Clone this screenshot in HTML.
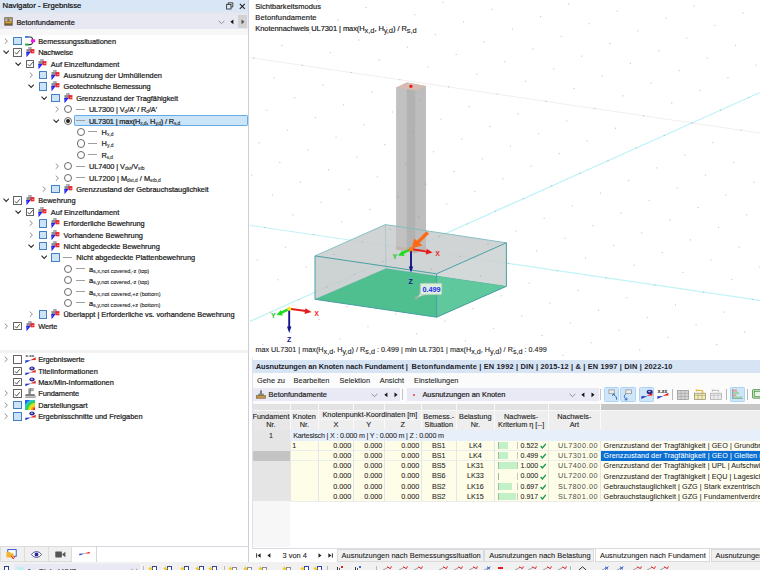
<!DOCTYPE html>
<html lang="de"><head><meta charset="utf-8"><title>Navigator - Ergebnisse</title>
<style>
html,body{margin:0;padding:0}
body{width:760px;height:570px;overflow:hidden;background:#fff;position:relative;font-family:"Liberation Sans",sans-serif;font-size:7.4px;color:#1b1b1b;-webkit-text-stroke-width:0.22px}
.a{position:absolute;white-space:nowrap}
svg text{-webkit-text-stroke-width:0}
sub{font-size:66%;vertical-align:baseline;position:relative;top:0.22em;line-height:0;-webkit-text-stroke-width:0.08px}
.nt{font-size:7.4px;line-height:11px;height:11px}
.s2 sub{font-size:76%}
.vt{font-size:7.2px;line-height:10px;-webkit-text-stroke-width:0.1px}
.vt sub{font-size:100%;top:0.3em}
.cbp{width:8.5px;height:8.5px;box-sizing:border-box;border:0.9px solid #3f7fc4;background:#cfe3f6;border-radius:0.6px}
.cbc{width:8.5px;height:8.5px;box-sizing:border-box;border:0.8px solid #626262;background:#fff;border-radius:0.6px}
.rd{width:8.3px;height:8.3px;box-sizing:border-box;border:0.8px solid #6a6a6a;background:#fff;border-radius:50%}
.rdd{position:absolute;left:1.55px;top:1.55px;width:3.8px;height:3.8px;border-radius:50%;background:#222}
.th{font-size:7.3px;line-height:8.3px;text-align:center;color:#222;-webkit-text-stroke-width:0.12px}
.td{font-size:7.2px;line-height:10.15px;height:10.15px;margin-top:0.45px;-webkit-text-stroke-width:0.06px}
.mono{font-size:7.3px;-webkit-text-stroke-width:0;color:#505050}
.tb{font-size:7.4px;line-height:11px;-webkit-text-stroke-width:0.1px}
.ttl{font-size:7.4px;line-height:11px;font-weight:700;color:#1c1c2a;-webkit-text-stroke-width:0}
.hb{background:#cfe6fa;border:0.7px solid #acd4f4;box-sizing:border-box;border-radius:1.5px}
</style></head><body>
<!-- navigator -->
<div class="a" style="left:0;top:0;width:248px;height:14px;background:#e4e7ee"></div>
<div class="a" style="left:0;top:0;width:248px;height:12px;background:#d9e6f5"></div>
<div class="a" style="left:2.6px;top:0.4px;font-size:7.75px;line-height:11px;color:#111">Navigator - Ergebnisse</div>
<svg class="a" style="left:226px;top:2px" width="8" height="8" viewBox="0 0 8 8"><rect x="0.6" y="2.4" width="4.4" height="4.6" fill="none" stroke="#333" stroke-width="0.9"/><path d="M2.2 2.2 V0.8 H6.8 V5 H5.2" fill="none" stroke="#333" stroke-width="0.9"/></svg>
<svg class="a" style="left:238.6px;top:2.6px" width="7" height="7" viewBox="0 0 7 7"><path d="M0.8 0.8 L5.8 5.8 M5.8 0.8 L0.8 5.8" stroke="#222" stroke-width="1.1"/></svg>
<div class="a" style="left:0;top:13.9px;width:248px;height:14.8px;background:#e8e8f3"></div>
<div class="a" style="left:0;top:28.7px;width:248px;height:6px;background:#f7f7f7"></div>
<div class="a" style="left:238px;top:15px;width:9px;height:13.2px;background:#d2d2d2"></div>
<svg class="a" style="left:4px;top:16.6px" width="9" height="9" viewBox="0 0 9 9"><rect x="0.3" y="0.3" width="8.4" height="8.4" fill="#6a5a40"/><rect x="1.2" y="1.2" width="6.6" height="3.4" fill="#c8b48a"/><rect x="1.4" y="4.8" width="6.2" height="1.6" fill="#e0a020"/><rect x="3.4" y="1.4" width="2.2" height="3.4" fill="#777"/></svg>
<div class="a nt" style="left:16.4px;top:16.6px">Betonfundamente</div>
<svg class="a" style="left:218px;top:19.6px" width="7" height="5" viewBox="0 0 7 5"><path d="M0.6 0.8 L3.5 3.7 L6.4 0.8" fill="none" stroke="#777" stroke-width="0.8"/></svg>
<svg class="a" style="left:230px;top:19.4px" width="4" height="6" viewBox="0 0 4 6"><polygon points="3.4,0.4 3.4,5.2 0.4,2.8" fill="#111"/></svg>
<svg class="a" style="left:240.8px;top:19.4px" width="4" height="6" viewBox="0 0 4 6"><polygon points="0.5,0.4 0.5,5.2 3.5,2.8" fill="#555"/></svg>
<div class="a" style="left:73.5px;top:115.30px;width:174.2px;height:10.5px;background:#cce4f7;border:0.8px solid #62abe8;border-radius:1.2px;box-sizing:border-box"></div>
<svg class="a" style="left:4.10px;top:37.80px" width="4.4" height="6.4" viewBox="0 0 4.4 6.4"><path d="M0.7 0.5 L3.4 3.2 L0.7 5.9" fill="none" stroke="#8c8c8c" stroke-width="1"/></svg><div class="a cbp" style="left:13.20px;top:36.70px"></div><svg class="a" style="left:25.00px;top:36.30px" width="11" height="10" viewBox="0 0 11 10"><path d="M3 1 H5.4 C8.4 1 8.4 8.6 5.4 8.6 H3" fill="none" stroke="#303030" stroke-width="1.1"/><rect x="0" y="0" width="3.4" height="1.9" fill="#3b7cf0"/><rect x="0" y="7.6" width="3.4" height="2" fill="#22b534"/><rect x="6" y="3.2" width="4.2" height="3.2" rx="0.8" fill="#f414ea"/></svg><div class="a nt" style="left:38.20px;top:35.75px;letter-spacing:-0.033px;">Bemessungssituationen</div>
<svg class="a" style="left:2.70px;top:50.20px" width="6.4" height="4.4" viewBox="0 0 6.4 4.4"><path d="M0.5 0.7 L3.2 3.4 L5.9 0.7" fill="none" stroke="#2b2b2b" stroke-width="1.1"/></svg><div class="a cbc" style="left:13.20px;top:48.10px"><svg width="8.5" height="8.5" viewBox="0 0 8.5 8.5" style="position:absolute;left:-0.8px;top:-0.8px"><path d="M1.9 4.3 L3.6 6.1 L6.8 2.2" fill="none" stroke="#333" stroke-width="0.85"/></svg></div><svg class="a" style="left:25.60px;top:47.20px" width="9" height="11" viewBox="0 0 9 11"><rect x="2.4" y="0" width="1.2" height="2.6" fill="#858590"/><rect x="4.2" y="0" width="1.3" height="2.6" fill="#858590"/><rect x="3.6" y="0.2" width="0.6" height="2.4" fill="#b4b4c0"/><rect x="0.45" y="2.1" width="5.2" height="3" fill="#8a8a94"/><polygon points="0.2,5.1 4.7,5.1 0.6,10.3" fill="#2222f0"/><rect x="4.5" y="2.1" width="3.9" height="4.2" fill="#ee2630"/><rect x="6" y="4.3" width="1.5" height="0.6" fill="#fff" opacity="0.85"/><rect x="1.3" y="6.3" width="0.8" height="0.8" fill="#8a8af8"/></svg><div class="a nt" style="left:38.20px;top:47.15px;letter-spacing:-0.151px;">Nachweise</div>
<svg class="a" style="left:15.37px;top:61.60px" width="6.4" height="4.4" viewBox="0 0 6.4 4.4"><path d="M0.5 0.7 L3.2 3.4 L5.9 0.7" fill="none" stroke="#2b2b2b" stroke-width="1.1"/></svg><div class="a cbc" style="left:25.87px;top:59.50px"><svg width="8.5" height="8.5" viewBox="0 0 8.5 8.5" style="position:absolute;left:-0.8px;top:-0.8px"><path d="M1.9 4.3 L3.6 6.1 L6.8 2.2" fill="none" stroke="#333" stroke-width="0.85"/></svg></div><svg class="a" style="left:38.27px;top:58.60px" width="9" height="11" viewBox="0 0 9 11"><rect x="2.4" y="0" width="1.2" height="2.6" fill="#858590"/><rect x="4.2" y="0" width="1.3" height="2.6" fill="#858590"/><rect x="3.6" y="0.2" width="0.6" height="2.4" fill="#b4b4c0"/><rect x="0.45" y="2.1" width="5.2" height="3" fill="#8a8a94"/><polygon points="0.2,5.1 4.7,5.1 0.6,10.3" fill="#2222f0"/><rect x="4.5" y="2.1" width="3.9" height="4.2" fill="#ee2630"/><rect x="6" y="4.3" width="1.5" height="0.6" fill="#fff" opacity="0.85"/><rect x="1.3" y="6.3" width="0.8" height="0.8" fill="#8a8af8"/></svg><div class="a nt" style="left:50.87px;top:58.55px;letter-spacing:0.007px;">Auf Einzelfundament</div>
<svg class="a" style="left:29.44px;top:72.00px" width="4.4" height="6.4" viewBox="0 0 4.4 6.4"><path d="M0.7 0.5 L3.4 3.2 L0.7 5.9" fill="none" stroke="#8c8c8c" stroke-width="1"/></svg><div class="a cbp" style="left:38.54px;top:70.90px"></div><svg class="a" style="left:50.94px;top:70.00px" width="9" height="11" viewBox="0 0 9 11"><rect x="2.4" y="0" width="1.2" height="2.6" fill="#858590"/><rect x="4.2" y="0" width="1.3" height="2.6" fill="#858590"/><rect x="3.6" y="0.2" width="0.6" height="2.4" fill="#b4b4c0"/><rect x="0.45" y="2.1" width="5.2" height="3" fill="#8a8a94"/><polygon points="0.2,5.1 4.7,5.1 0.6,10.3" fill="#2222f0"/><rect x="4.5" y="2.1" width="3.9" height="4.2" fill="#ee2630"/><rect x="6" y="4.3" width="1.5" height="0.6" fill="#fff" opacity="0.85"/><rect x="1.3" y="6.3" width="0.8" height="0.8" fill="#8a8af8"/></svg><div class="a nt" style="left:63.54px;top:69.95px;letter-spacing:0.042px;">Ausnutzung der Umhüllenden</div>
<svg class="a" style="left:28.04px;top:84.40px" width="6.4" height="4.4" viewBox="0 0 6.4 4.4"><path d="M0.5 0.7 L3.2 3.4 L5.9 0.7" fill="none" stroke="#2b2b2b" stroke-width="1.1"/></svg><div class="a cbp" style="left:38.54px;top:82.30px"></div><svg class="a" style="left:50.94px;top:81.40px" width="9" height="11" viewBox="0 0 9 11"><rect x="2.4" y="0" width="1.2" height="2.6" fill="#858590"/><rect x="4.2" y="0" width="1.3" height="2.6" fill="#858590"/><rect x="3.6" y="0.2" width="0.6" height="2.4" fill="#b4b4c0"/><rect x="0.45" y="2.1" width="5.2" height="3" fill="#8a8a94"/><polygon points="0.2,5.1 4.7,5.1 0.6,10.3" fill="#2222f0"/><rect x="4.5" y="2.1" width="3.9" height="4.2" fill="#ee2630"/><rect x="6" y="4.3" width="1.5" height="0.6" fill="#fff" opacity="0.85"/><rect x="1.3" y="6.3" width="0.8" height="0.8" fill="#8a8af8"/></svg><div class="a nt" style="left:63.54px;top:81.35px;letter-spacing:-0.149px;">Geotechnische Bemessung</div>
<svg class="a" style="left:40.71px;top:95.80px" width="6.4" height="4.4" viewBox="0 0 6.4 4.4"><path d="M0.5 0.7 L3.2 3.4 L5.9 0.7" fill="none" stroke="#2b2b2b" stroke-width="1.1"/></svg><div class="a cbp" style="left:51.21px;top:93.70px"></div><svg class="a" style="left:63.61px;top:92.80px" width="9" height="11" viewBox="0 0 9 11"><rect x="2.4" y="0" width="1.2" height="2.6" fill="#858590"/><rect x="4.2" y="0" width="1.3" height="2.6" fill="#858590"/><rect x="3.6" y="0.2" width="0.6" height="2.4" fill="#b4b4c0"/><rect x="0.45" y="2.1" width="5.2" height="3" fill="#8a8a94"/><polygon points="0.2,5.1 4.7,5.1 0.6,10.3" fill="#2222f0"/><rect x="4.5" y="2.1" width="3.9" height="4.2" fill="#ee2630"/><rect x="6" y="4.3" width="1.5" height="0.6" fill="#fff" opacity="0.85"/><rect x="1.3" y="6.3" width="0.8" height="0.8" fill="#8a8af8"/></svg><div class="a nt" style="left:76.21px;top:92.75px;letter-spacing:-0.045px;">Grenzzustand der Tragfähigkeit</div>
<svg class="a" style="left:54.78px;top:106.20px" width="4.4" height="6.4" viewBox="0 0 4.4 6.4"><path d="M0.7 0.5 L3.4 3.2 L0.7 5.9" fill="none" stroke="#8c8c8c" stroke-width="1"/></svg><div class="a rd" style="left:63.88px;top:105.10px"></div><div class="a" style="left:75.68px;top:108.50px;width:9px;height:0.9px;background:#a0a0a0"></div><div class="a nt" style="left:88.88px;top:104.15px;letter-spacing:-0.113px;">UL7300 | V<sub>d</sub>/A' / R<sub>d</sub>/A'</div>
<svg class="a" style="left:53.38px;top:118.60px" width="6.4" height="4.4" viewBox="0 0 6.4 4.4"><path d="M0.5 0.7 L3.2 3.4 L5.9 0.7" fill="none" stroke="#2b2b2b" stroke-width="1.1"/></svg><div class="a rd" style="left:63.88px;top:116.50px"><div class="rdd"></div></div><div class="a" style="left:75.68px;top:119.90px;width:9px;height:0.9px;background:#a0a0a0"></div><div class="a nt" style="left:88.88px;top:115.55px;letter-spacing:-0.167px;">UL7301 | max(H<sub>x,d</sub>, H<sub>y,d</sub>) / R<sub>s,d</sub></div>
<div class="a rd" style="left:76.55px;top:127.90px"></div><div class="a" style="left:88.35px;top:131.30px;width:9px;height:0.9px;background:#a0a0a0"></div><div class="a nt" style="left:101.55px;top:126.95px;letter-spacing:0.048px;">H<sub>x,d</sub></div>
<div class="a rd" style="left:76.55px;top:139.30px"></div><div class="a" style="left:88.35px;top:142.70px;width:9px;height:0.9px;background:#a0a0a0"></div><div class="a nt" style="left:101.55px;top:138.35px;letter-spacing:0.137px;">H<sub>y,d</sub></div>
<div class="a rd" style="left:76.55px;top:150.70px"></div><div class="a" style="left:88.35px;top:154.10px;width:9px;height:0.9px;background:#a0a0a0"></div><div class="a nt" style="left:101.55px;top:149.75px;letter-spacing:-0.152px;">R<sub>s,d</sub></div>
<svg class="a" style="left:54.78px;top:163.20px" width="4.4" height="6.4" viewBox="0 0 4.4 6.4"><path d="M0.7 0.5 L3.4 3.2 L0.7 5.9" fill="none" stroke="#8c8c8c" stroke-width="1"/></svg><div class="a rd" style="left:63.88px;top:162.10px"></div><div class="a" style="left:75.68px;top:165.50px;width:9px;height:0.9px;background:#a0a0a0"></div><div class="a nt" style="left:88.88px;top:161.15px;letter-spacing:-0.075px;">UL7400 | V<sub>dst</sub>/V<sub>stb</sub></div>
<svg class="a" style="left:54.78px;top:174.60px" width="4.4" height="6.4" viewBox="0 0 4.4 6.4"><path d="M0.7 0.5 L3.4 3.2 L0.7 5.9" fill="none" stroke="#8c8c8c" stroke-width="1"/></svg><div class="a rd" style="left:63.88px;top:173.50px"></div><div class="a" style="left:75.68px;top:176.90px;width:9px;height:0.9px;background:#a0a0a0"></div><div class="a nt" style="left:88.88px;top:172.55px;letter-spacing:0.011px;">UL7200 | M<sub>dst,d</sub> / M<sub>stb,d</sub></div>
<svg class="a" style="left:42.11px;top:186.00px" width="4.4" height="6.4" viewBox="0 0 4.4 6.4"><path d="M0.7 0.5 L3.4 3.2 L0.7 5.9" fill="none" stroke="#8c8c8c" stroke-width="1"/></svg><div class="a cbp" style="left:51.21px;top:184.90px"></div><svg class="a" style="left:63.61px;top:184.00px" width="9" height="11" viewBox="0 0 9 11"><rect x="2.4" y="0" width="1.2" height="2.6" fill="#858590"/><rect x="4.2" y="0" width="1.3" height="2.6" fill="#858590"/><rect x="3.6" y="0.2" width="0.6" height="2.4" fill="#b4b4c0"/><rect x="0.45" y="2.1" width="5.2" height="3" fill="#8a8a94"/><polygon points="0.2,5.1 4.7,5.1 0.6,10.3" fill="#2222f0"/><rect x="4.5" y="2.1" width="3.9" height="4.2" fill="#ee2630"/><rect x="6" y="4.3" width="1.5" height="0.6" fill="#fff" opacity="0.85"/><rect x="1.3" y="6.3" width="0.8" height="0.8" fill="#8a8af8"/></svg><div class="a nt" style="left:76.21px;top:183.95px;letter-spacing:-0.043px;">Grenzzustand der Gebrauchstauglichkeit</div>
<svg class="a" style="left:2.70px;top:198.40px" width="6.4" height="4.4" viewBox="0 0 6.4 4.4"><path d="M0.5 0.7 L3.2 3.4 L5.9 0.7" fill="none" stroke="#2b2b2b" stroke-width="1.1"/></svg><div class="a cbc" style="left:13.20px;top:196.30px"><svg width="8.5" height="8.5" viewBox="0 0 8.5 8.5" style="position:absolute;left:-0.8px;top:-0.8px"><path d="M1.9 4.3 L3.6 6.1 L6.8 2.2" fill="none" stroke="#333" stroke-width="0.85"/></svg></div><svg class="a" style="left:25.60px;top:195.40px" width="9" height="11" viewBox="0 0 9 11"><rect x="2.4" y="0" width="1.2" height="2.6" fill="#858590"/><rect x="4.2" y="0" width="1.3" height="2.6" fill="#858590"/><rect x="3.6" y="0.2" width="0.6" height="2.4" fill="#b4b4c0"/><rect x="0.45" y="2.1" width="5.2" height="3" fill="#8a8a94"/><polygon points="0.2,5.1 4.7,5.1 0.6,10.3" fill="#2222f0"/><rect x="4.5" y="2.1" width="3.9" height="4.2" fill="#ee2630"/><rect x="6" y="4.3" width="1.5" height="0.6" fill="#fff" opacity="0.85"/><rect x="1.3" y="6.3" width="0.8" height="0.8" fill="#8a8af8"/></svg><div class="a nt" style="left:38.20px;top:195.35px;letter-spacing:-0.010px;">Bewehrung</div>
<svg class="a" style="left:15.37px;top:209.80px" width="6.4" height="4.4" viewBox="0 0 6.4 4.4"><path d="M0.5 0.7 L3.2 3.4 L5.9 0.7" fill="none" stroke="#2b2b2b" stroke-width="1.1"/></svg><div class="a cbc" style="left:25.87px;top:207.70px"><svg width="8.5" height="8.5" viewBox="0 0 8.5 8.5" style="position:absolute;left:-0.8px;top:-0.8px"><path d="M1.9 4.3 L3.6 6.1 L6.8 2.2" fill="none" stroke="#333" stroke-width="0.85"/></svg></div><svg class="a" style="left:38.27px;top:206.80px" width="9" height="11" viewBox="0 0 9 11"><rect x="2.4" y="0" width="1.2" height="2.6" fill="#858590"/><rect x="4.2" y="0" width="1.3" height="2.6" fill="#858590"/><rect x="3.6" y="0.2" width="0.6" height="2.4" fill="#b4b4c0"/><rect x="0.45" y="2.1" width="5.2" height="3" fill="#8a8a94"/><polygon points="0.2,5.1 4.7,5.1 0.6,10.3" fill="#2222f0"/><rect x="4.5" y="2.1" width="3.9" height="4.2" fill="#ee2630"/><rect x="6" y="4.3" width="1.5" height="0.6" fill="#fff" opacity="0.85"/><rect x="1.3" y="6.3" width="0.8" height="0.8" fill="#8a8af8"/></svg><div class="a nt" style="left:50.87px;top:206.75px;letter-spacing:0.007px;">Auf Einzelfundament</div>
<svg class="a" style="left:29.44px;top:220.20px" width="4.4" height="6.4" viewBox="0 0 4.4 6.4"><path d="M0.7 0.5 L3.4 3.2 L0.7 5.9" fill="none" stroke="#8c8c8c" stroke-width="1"/></svg><div class="a cbp" style="left:38.54px;top:219.10px"></div><svg class="a" style="left:50.94px;top:218.20px" width="9" height="11" viewBox="0 0 9 11"><rect x="2.4" y="0" width="1.2" height="2.6" fill="#858590"/><rect x="4.2" y="0" width="1.3" height="2.6" fill="#858590"/><rect x="3.6" y="0.2" width="0.6" height="2.4" fill="#b4b4c0"/><rect x="0.45" y="2.1" width="5.2" height="3" fill="#8a8a94"/><polygon points="0.2,5.1 4.7,5.1 0.6,10.3" fill="#2222f0"/><rect x="4.5" y="2.1" width="3.9" height="4.2" fill="#ee2630"/><rect x="6" y="4.3" width="1.5" height="0.6" fill="#fff" opacity="0.85"/><rect x="1.3" y="6.3" width="0.8" height="0.8" fill="#8a8af8"/></svg><div class="a nt" style="left:63.54px;top:218.15px;letter-spacing:-0.008px;">Erforderliche Bewehrung</div>
<svg class="a" style="left:29.44px;top:231.60px" width="4.4" height="6.4" viewBox="0 0 4.4 6.4"><path d="M0.7 0.5 L3.4 3.2 L0.7 5.9" fill="none" stroke="#8c8c8c" stroke-width="1"/></svg><div class="a cbp" style="left:38.54px;top:230.50px"></div><svg class="a" style="left:50.94px;top:229.60px" width="9" height="11" viewBox="0 0 9 11"><rect x="2.4" y="0" width="1.2" height="2.6" fill="#858590"/><rect x="4.2" y="0" width="1.3" height="2.6" fill="#858590"/><rect x="3.6" y="0.2" width="0.6" height="2.4" fill="#b4b4c0"/><rect x="0.45" y="2.1" width="5.2" height="3" fill="#8a8a94"/><polygon points="0.2,5.1 4.7,5.1 0.6,10.3" fill="#2222f0"/><rect x="4.5" y="2.1" width="3.9" height="4.2" fill="#ee2630"/><rect x="6" y="4.3" width="1.5" height="0.6" fill="#fff" opacity="0.85"/><rect x="1.3" y="6.3" width="0.8" height="0.8" fill="#8a8af8"/></svg><div class="a nt" style="left:63.54px;top:229.55px;letter-spacing:0.002px;">Vorhandene Bewehrung</div>
<svg class="a" style="left:28.04px;top:244.00px" width="6.4" height="4.4" viewBox="0 0 6.4 4.4"><path d="M0.5 0.7 L3.2 3.4 L5.9 0.7" fill="none" stroke="#2b2b2b" stroke-width="1.1"/></svg><div class="a cbp" style="left:38.54px;top:241.90px"></div><svg class="a" style="left:50.94px;top:241.00px" width="9" height="11" viewBox="0 0 9 11"><rect x="2.4" y="0" width="1.2" height="2.6" fill="#858590"/><rect x="4.2" y="0" width="1.3" height="2.6" fill="#858590"/><rect x="3.6" y="0.2" width="0.6" height="2.4" fill="#b4b4c0"/><rect x="0.45" y="2.1" width="5.2" height="3" fill="#8a8a94"/><polygon points="0.2,5.1 4.7,5.1 0.6,10.3" fill="#2222f0"/><rect x="4.5" y="2.1" width="3.9" height="4.2" fill="#ee2630"/><rect x="6" y="4.3" width="1.5" height="0.6" fill="#fff" opacity="0.85"/><rect x="1.3" y="6.3" width="0.8" height="0.8" fill="#8a8af8"/></svg><div class="a nt" style="left:63.54px;top:240.95px;letter-spacing:-0.012px;">Nicht abgedeckte Bewehrung</div>
<svg class="a" style="left:40.71px;top:255.40px" width="6.4" height="4.4" viewBox="0 0 6.4 4.4"><path d="M0.5 0.7 L3.2 3.4 L5.9 0.7" fill="none" stroke="#2b2b2b" stroke-width="1.1"/></svg><div class="a cbp" style="left:51.21px;top:253.30px"></div><div class="a" style="left:63.01px;top:256.70px;width:9px;height:0.9px;background:#a0a0a0"></div><div class="a nt" style="left:76.21px;top:252.35px;letter-spacing:0.007px;">Nicht abgedeckte Plattenbewehrung</div>
<div class="a rd" style="left:63.88px;top:264.70px"></div><div class="a" style="left:75.68px;top:268.10px;width:9px;height:0.9px;background:#a0a0a0"></div><div class="a nt" style="left:88.88px;top:263.75px;letter-spacing:-0.047px;"><span class="s2">a<sub>s,x,not covered,-z (top)</sub></span></div>
<div class="a rd" style="left:63.88px;top:276.10px"></div><div class="a" style="left:75.68px;top:279.50px;width:9px;height:0.9px;background:#a0a0a0"></div><div class="a nt" style="left:88.88px;top:275.15px;letter-spacing:-0.030px;"><span class="s2">a<sub>s,y,not covered,-z (top)</sub></span></div>
<div class="a rd" style="left:63.88px;top:287.50px"></div><div class="a" style="left:75.68px;top:290.90px;width:9px;height:0.9px;background:#a0a0a0"></div><div class="a nt" style="left:88.88px;top:286.55px;letter-spacing:-0.022px;"><span class="s2">a<sub>s,x,not covered,+z (bottom)</sub></span></div>
<div class="a rd" style="left:63.88px;top:298.90px"></div><div class="a" style="left:75.68px;top:302.30px;width:9px;height:0.9px;background:#a0a0a0"></div><div class="a nt" style="left:88.88px;top:297.95px;letter-spacing:-0.008px;"><span class="s2">a<sub>s,y,not covered,+z (bottom)</sub></span></div>
<svg class="a" style="left:29.44px;top:311.40px" width="4.4" height="6.4" viewBox="0 0 4.4 6.4"><path d="M0.7 0.5 L3.4 3.2 L0.7 5.9" fill="none" stroke="#8c8c8c" stroke-width="1"/></svg><div class="a cbp" style="left:38.54px;top:310.30px"></div><svg class="a" style="left:50.94px;top:309.40px" width="9" height="11" viewBox="0 0 9 11"><rect x="2.4" y="0" width="1.2" height="2.6" fill="#858590"/><rect x="4.2" y="0" width="1.3" height="2.6" fill="#858590"/><rect x="3.6" y="0.2" width="0.6" height="2.4" fill="#b4b4c0"/><rect x="0.45" y="2.1" width="5.2" height="3" fill="#8a8a94"/><polygon points="0.2,5.1 4.7,5.1 0.6,10.3" fill="#2222f0"/><rect x="4.5" y="2.1" width="3.9" height="4.2" fill="#ee2630"/><rect x="6" y="4.3" width="1.5" height="0.6" fill="#fff" opacity="0.85"/><rect x="1.3" y="6.3" width="0.8" height="0.8" fill="#8a8af8"/></svg><div class="a nt" style="left:63.54px;top:309.35px;letter-spacing:-0.021px;">Überlappt | Erforderliche vs. vorhandene Bewehrung</div>
<svg class="a" style="left:4.10px;top:322.80px" width="4.4" height="6.4" viewBox="0 0 4.4 6.4"><path d="M0.7 0.5 L3.4 3.2 L0.7 5.9" fill="none" stroke="#8c8c8c" stroke-width="1"/></svg><div class="a cbc" style="left:13.20px;top:321.70px"><svg width="8.5" height="8.5" viewBox="0 0 8.5 8.5" style="position:absolute;left:-0.8px;top:-0.8px"><path d="M1.9 4.3 L3.6 6.1 L6.8 2.2" fill="none" stroke="#333" stroke-width="0.85"/></svg></div><svg class="a" style="left:25.60px;top:320.80px" width="9" height="11" viewBox="0 0 9 11"><rect x="2.4" y="0" width="1.2" height="2.6" fill="#858590"/><rect x="4.2" y="0" width="1.3" height="2.6" fill="#858590"/><rect x="3.6" y="0.2" width="0.6" height="2.4" fill="#b4b4c0"/><rect x="0.45" y="2.1" width="5.2" height="3" fill="#8a8a94"/><polygon points="0.2,5.1 4.7,5.1 0.6,10.3" fill="#2222f0"/><rect x="4.5" y="2.1" width="3.9" height="4.2" fill="#ee2630"/><rect x="6" y="4.3" width="1.5" height="0.6" fill="#fff" opacity="0.85"/><rect x="1.3" y="6.3" width="0.8" height="0.8" fill="#8a8af8"/></svg><div class="a nt" style="left:38.20px;top:320.75px;letter-spacing:-0.116px;">Werte</div>
<svg class="a" style="left:4.10px;top:356.20px" width="4.4" height="6.4" viewBox="0 0 4.4 6.4"><path d="M0.7 0.5 L3.4 3.2 L0.7 5.9" fill="none" stroke="#8c8c8c" stroke-width="1"/></svg>
<div class="a cbc" style="left:13.20px;top:355.10px"></div>
<svg class="a" style="left:24.60px;top:354.10px" width="11" height="10" viewBox="0 0 11 10"><text x="0.6" y="3.4" font-family="Liberation Sans" font-size="4.4" font-weight="700" fill="#222">x.xx</text><polygon points="0.3,6.25 0.3,8.95 5.90,6.15" fill="#1c37c8"/><polygon points="5.10,6.15 10.70,3.35 10.70,6.05" fill="#e8241c"/></svg>
<div class="a nt" style="left:38.2px;top:354.15px;letter-spacing:-0.073px;">Ergebniswerte</div>
<div class="a cbc" style="left:13.20px;top:366.50px"><svg width="8.5" height="8.5" viewBox="0 0 8.5 8.5" style="position:absolute;left:-0.8px;top:-0.8px"><path d="M1.9 4.3 L3.6 6.1 L6.8 2.2" fill="none" stroke="#333" stroke-width="0.85"/></svg></div>
<svg class="a" style="left:24.60px;top:365.50px" width="11" height="10" viewBox="0 0 11 10"><ellipse cx="7" cy="2.5" rx="2.7" ry="2" fill="#2e2e96"/><ellipse cx="6.8" cy="2.2" rx="1.2" ry="0.7" fill="#b8b8ee"/><polygon points="0.3,6.65 0.3,9.35 5.90,6.55" fill="#1c37c8"/><polygon points="5.10,6.55 10.70,3.75 10.70,6.45" fill="#e8241c"/></svg>
<div class="a nt" style="left:38.2px;top:365.55px;letter-spacing:0.074px;">Titelinformationen</div>
<div class="a cbc" style="left:13.20px;top:377.90px"><svg width="8.5" height="8.5" viewBox="0 0 8.5 8.5" style="position:absolute;left:-0.8px;top:-0.8px"><path d="M1.9 4.3 L3.6 6.1 L6.8 2.2" fill="none" stroke="#333" stroke-width="0.85"/></svg></div>
<svg class="a" style="left:24.60px;top:376.90px" width="11" height="10" viewBox="0 0 11 10"><ellipse cx="7" cy="2.5" rx="2.7" ry="2" fill="#2e2e96"/><ellipse cx="6.8" cy="2.2" rx="1.2" ry="0.7" fill="#b8b8ee"/><polygon points="0.3,6.65 0.3,9.35 5.90,6.55" fill="#1c37c8"/><polygon points="5.10,6.55 10.70,3.75 10.70,6.45" fill="#e8241c"/></svg>
<div class="a nt" style="left:38.2px;top:376.95px;">Max/Min-Informationen</div>
<svg class="a" style="left:4.10px;top:390.40px" width="4.4" height="6.4" viewBox="0 0 4.4 6.4"><path d="M0.7 0.5 L3.4 3.2 L0.7 5.9" fill="none" stroke="#8c8c8c" stroke-width="1"/></svg>
<div class="a cbc" style="left:13.20px;top:389.30px"><svg width="8.5" height="8.5" viewBox="0 0 8.5 8.5" style="position:absolute;left:-0.8px;top:-0.8px"><path d="M1.9 4.3 L3.6 6.1 L6.8 2.2" fill="none" stroke="#333" stroke-width="0.85"/></svg></div>
<svg class="a" style="left:24.60px;top:388.30px" width="11" height="10" viewBox="0 0 11 10"><rect x="3.4" y="0.5" width="2.4" height="6" fill="#8a8a8a"/><rect x="5.6" y="0.5" width="2.6" height="2.4" fill="#b0b0b0" stroke="#666" stroke-width="0.4"/><rect x="1" y="6.2" width="8.4" height="1.6" fill="#9a9a9a" stroke="#555" stroke-width="0.4"/><rect x="0.3" y="7.8" width="10" height="1.8" fill="#c8c8c8" stroke="#555" stroke-width="0.4"/></svg>
<div class="a nt" style="left:38.2px;top:388.35px;letter-spacing:-0.070px;">Fundamente</div>
<svg class="a" style="left:4.10px;top:401.80px" width="4.4" height="6.4" viewBox="0 0 4.4 6.4"><path d="M0.7 0.5 L3.4 3.2 L0.7 5.9" fill="none" stroke="#8c8c8c" stroke-width="1"/></svg>
<div class="a cbp" style="left:13.20px;top:400.70px"></div>
<svg class="a" style="left:24.60px;top:399.70px" width="10.4" height="10.4" viewBox="0 0 10.4 10.4"><defs><clipPath id="dc"><rect x="0" y="0" width="10.4" height="10.4"/></clipPath></defs><g clip-path="url(#dc)"><rect width="10.4" height="10.4" fill="#2a62f0"/><circle cx="10.4" cy="10.4" r="11.6" fill="#28c8e8"/><circle cx="10.4" cy="10.4" r="10" fill="#2ed058"/><circle cx="10.4" cy="10.4" r="7.6" fill="#b8e62a"/><circle cx="10.4" cy="10.4" r="6" fill="#ffe21e"/><circle cx="10.4" cy="10.4" r="4.4" fill="#ff961e"/><circle cx="10.4" cy="10.4" r="2.8" fill="#f0301e"/></g></svg>
<div class="a nt" style="left:38.2px;top:399.75px;letter-spacing:-0.027px;">Darstellungsart</div>
<svg class="a" style="left:4.10px;top:413.20px" width="4.4" height="6.4" viewBox="0 0 4.4 6.4"><path d="M0.7 0.5 L3.4 3.2 L0.7 5.9" fill="none" stroke="#8c8c8c" stroke-width="1"/></svg>
<div class="a cbp" style="left:13.20px;top:412.10px"></div>
<svg class="a" style="left:24.60px;top:411.10px" width="11" height="10" viewBox="0 0 11 10"><ellipse cx="7" cy="2.5" rx="2.7" ry="2" fill="#2e2e96"/><ellipse cx="6.8" cy="2.2" rx="1.2" ry="0.7" fill="#b8b8ee"/><polygon points="0.3,6.65 0.3,9.35 5.90,6.55" fill="#1c37c8"/><polygon points="5.10,6.55 10.70,3.75 10.70,6.45" fill="#e8241c"/></svg>
<div class="a nt" style="left:38.2px;top:411.15px;">Ergebnisschnitte und Freigaben</div>
<div class="a" style="left:0;top:349.8px;width:248px;height:3.2px;background:#f2f2f2"></div>
<!-- nav bottom tabs -->
<div class="a" style="left:0;top:546.3px;width:248px;height:15.4px;background:#fff;border-top:0.8px solid #d6d6de;box-sizing:border-box"></div>
<div class="a" style="left:0;top:546.3px;width:72.4px;height:15.4px;background:#f0f0f0;border:0.8px solid #dcdcdc;box-sizing:border-box"></div>
<div class="a" style="left:23.8px;top:546.3px;width:0.8px;height:15.4px;background:#dcdcdc"></div>
<div class="a" style="left:48.2px;top:546.3px;width:0.8px;height:15.4px;background:#dcdcdc"></div>
<div class="a" style="left:96.4px;top:546.3px;width:0.8px;height:15.4px;background:#d6d6de"></div>
<svg class="a" style="left:6.4px;top:548.6px" width="11" height="11" viewBox="0 0 11 11"><rect x="1.8" y="0.6" width="8.4" height="6.6" fill="#fff" stroke="#2a50c0" stroke-width="0.9"/><polygon points="0.4,3 4,3 5,4.2 7.6,4.2 7.6,8.6 0.4,8.6" fill="#f2b632"/><path d="M5.2 6.6 L7.2 10 L9 7.4" fill="none" stroke="#e02020" stroke-width="0.9"/></svg>
<svg class="a" style="left:30.6px;top:550.6px" width="11" height="7" viewBox="0 0 11 7"><path d="M0.5 3.5 C3 -0.3 8 -0.3 10.5 3.5 C8 7.3 3 7.3 0.5 3.5 Z" fill="#fff" stroke="#3a3a8c" stroke-width="0.9"/><circle cx="5.5" cy="3.5" r="1.9" fill="#2a2a9a"/></svg>
<svg class="a" style="left:55px;top:550.6px" width="11" height="7" viewBox="0 0 11 7"><rect x="0.3" y="0.6" width="6.6" height="5.8" rx="0.6" fill="#555"/><polygon points="7,3.5 10.4,0.8 10.4,6.2" fill="#555"/></svg>
<svg class="a" style="left:78.6px;top:550.4px" width="11" height="7" viewBox="0 0 11 7"><polygon points="0.3,3.65 0.3,5.55 5.90,3.60" fill="#1c37c8"/><polygon points="5.10,3.60 10.70,1.65 10.70,3.55" fill="#e8241c"/></svg>
<!-- splitter -->
<div class="a" style="left:247.7px;top:0;width:1.8px;height:562px;background:#cdcedb"></div>

<svg class="a" style="left:250px;top:0" width="510" height="357" viewBox="250 0 510 357">
<line x1="250" y1="57.6" x2="760" y2="133" stroke="#f0eaea" stroke-width="0.8"/>
<line x1="250" y1="321.4" x2="760" y2="92.5" stroke="#b9f2f6" stroke-width="1.1"/>
<line x1="250" y1="225.4" x2="760" y2="300.4" stroke="#c2f3f6" stroke-width="1.1"/>
<!-- top face -->
<polygon points="315,255.9 385.4,224.6 506.4,242.8 436.6,273.8" fill="#c9cdcd" fill-opacity="0.85"/>
<!-- front faces -->
<polygon points="315,255.9 436.6,273.8 436.6,317.2 315,299.3" fill="#c6cbcb" fill-opacity="0.87"/>
<polygon points="436.6,273.8 506.4,242.8 506.4,286.3 436.6,317.2" fill="#cdd2d2" fill-opacity="0.87"/>
<!-- green bottom -->
<polygon points="315,299.3 386,268.6 506.4,286.3 436.6,317.2" fill="#4fbf90"/>
<polygon points="436.6,276 506.4,286.3 436.6,317.2" fill="#5fc89d"/>
<!-- column -->
<polygon points="396.3,87.4 406.8,82.5 426,86 426,249 415.4,253 406.8,251 396.3,249.5" fill="#bbbbbb"/>
<polygon points="396.3,87.4 406.8,84 406.8,251 396.3,249.5" fill="#c1c1c1"/>
<polygon points="406.8,84 415.4,90.4 415.4,253 406.8,251" fill="#b2b2b2"/>
<polygon points="415.4,90.4 426,86 426,249 415.4,253" fill="#bdbdbd"/>
<polygon points="396.3,87.4 406.8,82.5 426,86 415.4,90.4" fill="#d6bcb1"/>
<circle cx="410.9" cy="86.3" r="1.6" fill="#f01818"/>
<polygon points="396.3,246.4 406.8,247.6 415.4,249.4 426,246 426,249 415.4,253 406.8,251 396.3,249.5" fill="#c4a89c" fill-opacity="0.45"/>
<polyline points="315,255.9 385.4,224.6 506.4,242.8" fill="none" stroke="#7dbcc0" stroke-width="0.9"/>
<g fill="none" stroke="#48a0a3" stroke-width="1">
<polyline points="315,255.9 436.6,273.8 506.4,242.8"/>
<polyline points="315,255.9 315,299.3 436.6,317.2 436.6,273.8"/>
<polyline points="436.6,317.2 506.4,286.3 506.4,242.8"/>
</g>
<g fill="none" stroke="#4fa3a6" stroke-width="0.6" stroke-opacity="0.4">
<polyline points="315,299.3 386,268.6 506.4,286.3"/>
<line x1="385.4" y1="224.6" x2="386" y2="268.6"/>
</g>
<g fill="#909090" fill-opacity="0.5"><rect x="260.6" y="25.1" width="1.1" height="1.1"/><rect x="288.7" y="12.4" width="1.1" height="1.1"/><rect x="316.8" y="-0.2" width="1.1" height="1.1"/><rect x="253.1" y="57.5" width="1.1" height="1.1"/><rect x="281.2" y="44.9" width="1.1" height="1.1"/><rect x="309.3" y="32.3" width="1.1" height="1.1"/><rect x="337.4" y="19.6" width="1.1" height="1.1"/><rect x="365.6" y="7.0" width="1.1" height="1.1"/><rect x="273.7" y="77.3" width="1.1" height="1.1"/><rect x="301.8" y="64.7" width="1.1" height="1.1"/><rect x="329.9" y="52.1" width="1.1" height="1.1"/><rect x="358.1" y="39.5" width="1.1" height="1.1"/><rect x="386.2" y="26.8" width="1.1" height="1.1"/><rect x="414.3" y="14.2" width="1.1" height="1.1"/><rect x="442.4" y="1.6" width="1.1" height="1.1"/><rect x="266.2" y="109.8" width="1.1" height="1.1"/><rect x="294.3" y="97.1" width="1.1" height="1.1"/><rect x="322.4" y="84.5" width="1.1" height="1.1"/><rect x="350.6" y="71.9" width="1.1" height="1.1"/><rect x="378.7" y="59.3" width="1.1" height="1.1"/><rect x="406.8" y="46.7" width="1.1" height="1.1"/><rect x="434.9" y="34.0" width="1.1" height="1.1"/><rect x="463.1" y="21.4" width="1.1" height="1.1"/><rect x="491.2" y="8.8" width="1.1" height="1.1"/><rect x="258.6" y="142.2" width="1.1" height="1.1"/><rect x="286.8" y="129.6" width="1.1" height="1.1"/><rect x="314.9" y="117.0" width="1.1" height="1.1"/><rect x="343.0" y="104.3" width="1.1" height="1.1"/><rect x="371.2" y="91.7" width="1.1" height="1.1"/><rect x="399.3" y="79.1" width="1.1" height="1.1"/><rect x="427.4" y="66.5" width="1.1" height="1.1"/><rect x="455.6" y="53.9" width="1.1" height="1.1"/><rect x="483.7" y="41.2" width="1.1" height="1.1"/><rect x="511.8" y="28.6" width="1.1" height="1.1"/><rect x="540.0" y="16.0" width="1.1" height="1.1"/><rect x="568.1" y="3.4" width="1.1" height="1.1"/><rect x="251.1" y="174.6" width="1.1" height="1.1"/><rect x="279.3" y="162.0" width="1.1" height="1.1"/><rect x="307.4" y="149.4" width="1.1" height="1.1"/><rect x="335.5" y="136.8" width="1.1" height="1.1"/><rect x="363.7" y="124.2" width="1.1" height="1.1"/><rect x="391.8" y="111.5" width="1.1" height="1.1"/><rect x="419.9" y="98.9" width="1.1" height="1.1"/><rect x="448.1" y="86.3" width="1.1" height="1.1"/><rect x="476.2" y="73.7" width="1.1" height="1.1"/><rect x="504.3" y="61.1" width="1.1" height="1.1"/><rect x="532.4" y="48.4" width="1.1" height="1.1"/><rect x="560.6" y="35.8" width="1.1" height="1.1"/><rect x="588.7" y="23.2" width="1.1" height="1.1"/><rect x="616.8" y="10.6" width="1.1" height="1.1"/><rect x="271.8" y="194.5" width="1.1" height="1.1"/><rect x="299.9" y="181.8" width="1.1" height="1.1"/><rect x="328.0" y="169.2" width="1.1" height="1.1"/><rect x="356.1" y="156.6" width="1.1" height="1.1"/><rect x="384.3" y="144.0" width="1.1" height="1.1"/><rect x="412.4" y="131.4" width="1.1" height="1.1"/><rect x="440.5" y="118.7" width="1.1" height="1.1"/><rect x="468.7" y="106.1" width="1.1" height="1.1"/><rect x="496.8" y="93.5" width="1.1" height="1.1"/><rect x="524.9" y="80.9" width="1.1" height="1.1"/><rect x="553.1" y="68.3" width="1.1" height="1.1"/><rect x="581.2" y="55.6" width="1.1" height="1.1"/><rect x="609.3" y="43.0" width="1.1" height="1.1"/><rect x="637.5" y="30.4" width="1.1" height="1.1"/><rect x="665.6" y="17.8" width="1.1" height="1.1"/><rect x="693.7" y="5.2" width="1.1" height="1.1"/><rect x="264.2" y="226.9" width="1.1" height="1.1"/><rect x="292.4" y="214.3" width="1.1" height="1.1"/><rect x="320.5" y="201.7" width="1.1" height="1.1"/><rect x="348.6" y="189.0" width="1.1" height="1.1"/><rect x="376.8" y="176.4" width="1.1" height="1.1"/><rect x="404.9" y="163.8" width="1.1" height="1.1"/><rect x="433.0" y="151.2" width="1.1" height="1.1"/><rect x="461.2" y="138.6" width="1.1" height="1.1"/><rect x="489.3" y="125.9" width="1.1" height="1.1"/><rect x="517.4" y="113.3" width="1.1" height="1.1"/><rect x="545.5" y="100.7" width="1.1" height="1.1"/><rect x="573.7" y="88.1" width="1.1" height="1.1"/><rect x="601.8" y="75.5" width="1.1" height="1.1"/><rect x="629.9" y="62.8" width="1.1" height="1.1"/><rect x="658.1" y="50.2" width="1.1" height="1.1"/><rect x="686.2" y="37.6" width="1.1" height="1.1"/><rect x="714.3" y="25.0" width="1.1" height="1.1"/><rect x="742.5" y="12.4" width="1.1" height="1.1"/><rect x="256.7" y="259.3" width="1.1" height="1.1"/><rect x="284.9" y="246.7" width="1.1" height="1.1"/><rect x="313.0" y="234.1" width="1.1" height="1.1"/><rect x="341.1" y="221.5" width="1.1" height="1.1"/><rect x="369.3" y="208.9" width="1.1" height="1.1"/><rect x="397.4" y="196.2" width="1.1" height="1.1"/><rect x="425.5" y="183.6" width="1.1" height="1.1"/><rect x="453.6" y="171.0" width="1.1" height="1.1"/><rect x="481.8" y="158.4" width="1.1" height="1.1"/><rect x="509.9" y="145.8" width="1.1" height="1.1"/><rect x="538.0" y="133.1" width="1.1" height="1.1"/><rect x="566.2" y="120.5" width="1.1" height="1.1"/><rect x="594.3" y="107.9" width="1.1" height="1.1"/><rect x="622.4" y="95.3" width="1.1" height="1.1"/><rect x="650.6" y="82.7" width="1.1" height="1.1"/><rect x="678.7" y="70.0" width="1.1" height="1.1"/><rect x="706.8" y="57.4" width="1.1" height="1.1"/><rect x="735.0" y="44.8" width="1.1" height="1.1"/><rect x="277.4" y="279.2" width="1.1" height="1.1"/><rect x="305.5" y="266.5" width="1.1" height="1.1"/><rect x="333.6" y="253.9" width="1.1" height="1.1"/><rect x="361.8" y="241.3" width="1.1" height="1.1"/><rect x="389.9" y="228.7" width="1.1" height="1.1"/><rect x="418.0" y="216.1" width="1.1" height="1.1"/><rect x="446.1" y="203.4" width="1.1" height="1.1"/><rect x="474.3" y="190.8" width="1.1" height="1.1"/><rect x="502.4" y="178.2" width="1.1" height="1.1"/><rect x="530.5" y="165.6" width="1.1" height="1.1"/><rect x="558.7" y="153.0" width="1.1" height="1.1"/><rect x="586.8" y="140.3" width="1.1" height="1.1"/><rect x="614.9" y="127.7" width="1.1" height="1.1"/><rect x="643.0" y="115.1" width="1.1" height="1.1"/><rect x="671.2" y="102.5" width="1.1" height="1.1"/><rect x="699.3" y="89.9" width="1.1" height="1.1"/><rect x="727.4" y="77.2" width="1.1" height="1.1"/><rect x="755.6" y="64.6" width="1.1" height="1.1"/><rect x="269.9" y="311.6" width="1.1" height="1.1"/><rect x="298.0" y="299.0" width="1.1" height="1.1"/><rect x="326.1" y="286.4" width="1.1" height="1.1"/><rect x="354.2" y="273.7" width="1.1" height="1.1"/><rect x="382.4" y="261.1" width="1.1" height="1.1"/><rect x="410.5" y="248.5" width="1.1" height="1.1"/><rect x="438.6" y="235.9" width="1.1" height="1.1"/><rect x="466.8" y="223.3" width="1.1" height="1.1"/><rect x="494.9" y="210.6" width="1.1" height="1.1"/><rect x="523.0" y="198.0" width="1.1" height="1.1"/><rect x="551.1" y="185.4" width="1.1" height="1.1"/><rect x="579.3" y="172.8" width="1.1" height="1.1"/><rect x="607.4" y="160.2" width="1.1" height="1.1"/><rect x="635.5" y="147.5" width="1.1" height="1.1"/><rect x="663.7" y="134.9" width="1.1" height="1.1"/><rect x="691.8" y="122.3" width="1.1" height="1.1"/><rect x="719.9" y="109.7" width="1.1" height="1.1"/><rect x="748.1" y="97.1" width="1.1" height="1.1"/><rect x="262.3" y="344.0" width="1.1" height="1.1"/><rect x="290.5" y="331.4" width="1.1" height="1.1"/><rect x="318.6" y="318.8" width="1.1" height="1.1"/><rect x="346.7" y="306.2" width="1.1" height="1.1"/><rect x="374.9" y="293.6" width="1.1" height="1.1"/><rect x="403.0" y="280.9" width="1.1" height="1.1"/><rect x="431.1" y="268.3" width="1.1" height="1.1"/><rect x="459.2" y="255.7" width="1.1" height="1.1"/><rect x="487.4" y="243.1" width="1.1" height="1.1"/><rect x="515.5" y="230.5" width="1.1" height="1.1"/><rect x="543.6" y="217.8" width="1.1" height="1.1"/><rect x="571.8" y="205.2" width="1.1" height="1.1"/><rect x="599.9" y="192.6" width="1.1" height="1.1"/><rect x="628.0" y="180.0" width="1.1" height="1.1"/><rect x="656.2" y="167.4" width="1.1" height="1.1"/><rect x="684.3" y="154.7" width="1.1" height="1.1"/><rect x="712.4" y="142.1" width="1.1" height="1.1"/><rect x="740.5" y="129.5" width="1.1" height="1.1"/><rect x="311.1" y="351.2" width="1.1" height="1.1"/><rect x="339.2" y="338.6" width="1.1" height="1.1"/><rect x="367.4" y="326.0" width="1.1" height="1.1"/><rect x="395.5" y="313.4" width="1.1" height="1.1"/><rect x="423.6" y="300.8" width="1.1" height="1.1"/><rect x="451.7" y="288.1" width="1.1" height="1.1"/><rect x="479.9" y="275.5" width="1.1" height="1.1"/><rect x="508.0" y="262.9" width="1.1" height="1.1"/><rect x="536.1" y="250.3" width="1.1" height="1.1"/><rect x="564.3" y="237.7" width="1.1" height="1.1"/><rect x="592.4" y="225.0" width="1.1" height="1.1"/><rect x="620.5" y="212.4" width="1.1" height="1.1"/><rect x="648.6" y="199.8" width="1.1" height="1.1"/><rect x="676.8" y="187.2" width="1.1" height="1.1"/><rect x="704.9" y="174.6" width="1.1" height="1.1"/><rect x="733.0" y="161.9" width="1.1" height="1.1"/><rect x="388.0" y="345.8" width="1.1" height="1.1"/><rect x="416.1" y="333.2" width="1.1" height="1.1"/><rect x="444.2" y="320.6" width="1.1" height="1.1"/><rect x="472.4" y="308.0" width="1.1" height="1.1"/><rect x="500.5" y="295.3" width="1.1" height="1.1"/><rect x="528.6" y="282.7" width="1.1" height="1.1"/><rect x="556.8" y="270.1" width="1.1" height="1.1"/><rect x="584.9" y="257.5" width="1.1" height="1.1"/><rect x="613.0" y="244.9" width="1.1" height="1.1"/><rect x="641.1" y="232.2" width="1.1" height="1.1"/><rect x="669.3" y="219.6" width="1.1" height="1.1"/><rect x="697.4" y="207.0" width="1.1" height="1.1"/><rect x="725.5" y="194.4" width="1.1" height="1.1"/><rect x="753.7" y="181.8" width="1.1" height="1.1"/><rect x="436.7" y="353.0" width="1.1" height="1.1"/><rect x="464.9" y="340.4" width="1.1" height="1.1"/><rect x="493.0" y="327.8" width="1.1" height="1.1"/><rect x="521.1" y="315.2" width="1.1" height="1.1"/><rect x="549.2" y="302.5" width="1.1" height="1.1"/><rect x="577.4" y="289.9" width="1.1" height="1.1"/><rect x="605.5" y="277.3" width="1.1" height="1.1"/><rect x="633.6" y="264.7" width="1.1" height="1.1"/><rect x="661.8" y="252.1" width="1.1" height="1.1"/><rect x="689.9" y="239.4" width="1.1" height="1.1"/><rect x="718.0" y="226.8" width="1.1" height="1.1"/><rect x="746.1" y="214.2" width="1.1" height="1.1"/><rect x="513.6" y="347.6" width="1.1" height="1.1"/><rect x="541.7" y="335.0" width="1.1" height="1.1"/><rect x="569.9" y="322.4" width="1.1" height="1.1"/><rect x="598.0" y="309.7" width="1.1" height="1.1"/><rect x="626.1" y="297.1" width="1.1" height="1.1"/><rect x="654.2" y="284.5" width="1.1" height="1.1"/><rect x="682.4" y="271.9" width="1.1" height="1.1"/><rect x="710.5" y="259.3" width="1.1" height="1.1"/><rect x="738.6" y="246.6" width="1.1" height="1.1"/><rect x="562.4" y="354.8" width="1.1" height="1.1"/><rect x="590.5" y="342.2" width="1.1" height="1.1"/><rect x="618.6" y="329.6" width="1.1" height="1.1"/><rect x="646.7" y="316.9" width="1.1" height="1.1"/><rect x="674.9" y="304.3" width="1.1" height="1.1"/><rect x="703.0" y="291.7" width="1.1" height="1.1"/><rect x="731.1" y="279.1" width="1.1" height="1.1"/><rect x="759.3" y="266.5" width="1.1" height="1.1"/><rect x="639.2" y="349.4" width="1.1" height="1.1"/><rect x="667.4" y="336.8" width="1.1" height="1.1"/><rect x="695.5" y="324.1" width="1.1" height="1.1"/><rect x="723.6" y="311.5" width="1.1" height="1.1"/><rect x="751.8" y="298.9" width="1.1" height="1.1"/><rect x="716.1" y="344.0" width="1.1" height="1.1"/><rect x="744.2" y="331.3" width="1.1" height="1.1"/></g>
<!-- axes at node -->
<line x1="411" y1="249" x2="411" y2="268" stroke="#14148c" stroke-width="1.9"/>
<polygon points="408.8,266.5 413.2,266.5 411,272.6" fill="#14148c"/>
<line x1="411" y1="249" x2="427" y2="251.6" stroke="#e81c1c" stroke-width="1.9"/>
<polygon points="426.6,248.8 432.6,252.6 425.8,254.6" fill="#e81c1c"/>
<line x1="411" y1="249" x2="402.6" y2="253.2" stroke="#20dc20" stroke-width="2.5"/>
<polygon points="402.4,250.4 404.4,256 398,255.4" fill="#20dc20"/>
<line x1="427.8" y1="232.4" x2="416.6" y2="243.6" stroke="#ff6a14" stroke-width="3.5"/>
<polygon points="411.8,248.2 414.2,238.6 422.4,245.6" fill="#ff6a14"/>
<circle cx="411" cy="249.2" r="2.3" fill="#ff7a14"/>
<text x="435.2" y="256.2" font-family="Liberation Sans" font-size="7" font-weight="700" fill="#f02828">X</text>
<text x="392.4" y="259" font-family="Liberation Sans" font-size="7" font-weight="700" fill="#22c822">Y</text>
<text x="408.6" y="283.6" font-family="Liberation Sans" font-size="7" font-weight="700" fill="#14148c">Z</text>
<!-- value callout -->
<path d="M416.5 298 C419 296 420.4 293.5 421 291.6 L428 294.6 C423 295 419.6 296.4 416.5 298 Z" fill="#d9efdc" stroke="#a4bcaa" stroke-width="0.4"/>
<rect x="420.2" y="283.2" width="21.7" height="11.5" rx="1" fill="#d9efdc" stroke="#a4bcaa" stroke-width="0.6"/>
<circle cx="416.3" cy="297.9" r="1.3" fill="#c0a4b0"/>
<text x="422.4" y="291.8" font-family="Liberation Sans" font-size="7.3" font-weight="700" fill="#2a2cf0">0.499</text>
<!-- triad -->
<line x1="289.2" y1="308.8" x2="289.2" y2="328" stroke="#14148c" stroke-width="1.9"/>
<polygon points="287,326.5 291.4,326.5 289.2,333" fill="#14148c"/>
<line x1="289.2" y1="308.8" x2="306" y2="311" stroke="#e81c1c" stroke-width="1.9"/>
<polygon points="305.4,308.2 311.6,312 304.6,314" fill="#e81c1c"/>
<line x1="289.2" y1="308.8" x2="281" y2="312.8" stroke="#20dc20" stroke-width="2.5"/>
<polygon points="280.8,310 282.8,315.6 276.4,315" fill="#20dc20"/>
<circle cx="289.2" cy="308.8" r="2" fill="#ffe81c"/>
<text x="314.2" y="315.6" font-family="Liberation Sans" font-size="7" font-weight="700" fill="#f02828">X</text>
<text x="271" y="318.4" font-family="Liberation Sans" font-size="7" font-weight="700" fill="#22c822">Y</text>
<text x="287" y="342" font-family="Liberation Sans" font-size="7" font-weight="700" fill="#14148c">Z</text>
</svg>
<div class="a vt" style="left:255.3px;top:2px;-webkit-text-stroke-width:0.18px;font-size:7.5px;letter-spacing:0.008px;">Sichtbarkeitsmodus</div>
<div class="a vt" style="left:255.3px;top:13.1px;-webkit-text-stroke-width:0.18px;font-size:7.5px;letter-spacing:0.145px;">Betonfundamente</div>
<div class="a vt" style="left:255.3px;top:24.2px;-webkit-text-stroke-width:0.18px;font-size:7.5px;letter-spacing:-0.079px;">Knotennachweis UL7301 | max(H<sub>x,d</sub>, H<sub>y,d</sub>) / R<sub>s,d</sub></div>
<div class="a vt" style="left:255.4px;top:344.6px;letter-spacing:0.021px;">max UL7301 | max(H<sub>x,d</sub>, H<sub>y,d</sub>) / R<sub>s,d</sub> : 0.499 | min UL7301 | max(H<sub>x,d</sub>, H<sub>y,d</sub>) / R<sub>s,d</sub> : 0.499</div>

<!-- table panel -->
<div class="a" style="left:252px;top:359.6px;width:508px;height:13px;background:#d6e4f4"></div>
<div class="a ttl" style="left:255.8px;top:360.9px;letter-spacing:-0.072px;">Ausnutzungen an Knoten nach Fundament |</div>
<div class="a ttl" style="left:411.6px;top:360.9px;letter-spacing:0.175px;">Betonfundamente | EN 1992 | DIN | 2015-12 | &amp; | EN 1997 | DIN | 2022-10</div>
<div class="a" style="left:252px;top:372.6px;width:508px;height:31px;background:#fbfbfb"></div>
<div class="a tb" style="left:257px;top:374.6px;-webkit-text-stroke-width:0.08px">Gehe zu</div>
<div class="a tb" style="left:293.6px;top:374.6px;-webkit-text-stroke-width:0.08px">Bearbeiten</div>
<div class="a tb" style="left:339.6px;top:374.6px;-webkit-text-stroke-width:0.08px">Selektion</div>
<div class="a tb" style="left:379.8px;top:374.6px;-webkit-text-stroke-width:0.08px">Ansicht</div>
<div class="a tb" style="left:414px;top:374.6px;-webkit-text-stroke-width:0.08px">Einstellungen</div>
<div class="a" style="left:252.8px;top:387.8px;width:147.4px;height:13.6px;background:#e9e9f5"></div>
<div class="a" style="left:406.6px;top:387.8px;width:192.4px;height:13.6px;background:#e9e9f5"></div>
<div class="a" style="left:402.4px;top:388.6px;width:0.8px;height:11.6px;background:#c4c4c4"></div>
<svg class="a" style="left:256px;top:389.6px" width="10" height="9" viewBox="0 0 10 9"><rect x="4" y="0.4" width="2" height="4.6" fill="#7a7a7a"/><rect x="2.2" y="3.6" width="5.6" height="2" fill="#8a8a8a"/><rect x="0.4" y="5.6" width="9.2" height="2.6" fill="#c89858" stroke="#7a4a1a" stroke-width="0.6"/><rect x="0.2" y="5.2" width="1.6" height="1.2" fill="#6ab04a"/><rect x="8.2" y="5.2" width="1.6" height="1.2" fill="#6ab04a"/></svg>
<div class="a tb" style="left:268.6px;top:389.2px;-webkit-text-stroke-width:0.2px">Betonfundamente</div>
<svg class="a" style="left:371.4px;top:392.6px" width="7" height="5" viewBox="0 0 7 5"><path d="M0.6 0.8 L3.5 3.7 L6.4 0.8" fill="none" stroke="#777" stroke-width="0.8"/></svg>
<svg class="a" style="left:384px;top:392.2px" width="4" height="6" viewBox="0 0 4 6"><polygon points="3.4,0.4 3.4,5.2 0.4,2.8" fill="#111"/></svg>
<svg class="a" style="left:393.6px;top:392.2px" width="4" height="6" viewBox="0 0 4 6"><polygon points="0.5,0.4 0.5,5.2 3.5,2.8" fill="#111"/></svg>
<div class="a" style="left:412.9px;top:393.8px;width:2px;height:2px;border-radius:50%;background:#e03a3a"></div>
<div class="a tb" style="left:422.4px;top:389.2px;-webkit-text-stroke-width:0.2px">Ausnutzungen an Knoten</div>
<svg class="a" style="left:569px;top:392.6px" width="7" height="5" viewBox="0 0 7 5"><path d="M0.6 0.8 L3.5 3.7 L6.4 0.8" fill="none" stroke="#777" stroke-width="0.8"/></svg>
<svg class="a" style="left:581.4px;top:392.2px" width="4" height="6" viewBox="0 0 4 6"><polygon points="3.4,0.4 3.4,5.2 0.4,2.8" fill="#111"/></svg>
<svg class="a" style="left:591.4px;top:392.2px" width="4" height="6" viewBox="0 0 4 6"><polygon points="0.5,0.4 0.5,5.2 3.5,2.8" fill="#111"/></svg>
<div class="a" style="left:599.6px;top:388.6px;width:0.8px;height:11.6px;background:#c4c4c4"></div>

<div class="a hb" style="left:603.8px;top:387.3px;width:15.6px;height:14.4px"></div>
<div class="a hb" style="left:620px;top:387.3px;width:15.6px;height:14.4px"></div>
<div class="a hb" style="left:638.6px;top:387.3px;width:15.8px;height:14.4px"></div>
<div class="a hb" style="left:729.5px;top:387.3px;width:15.8px;height:14.4px"></div>
<svg class="a" style="left:606px;top:388.6px" width="12" height="12" viewBox="0 0 12 12"><rect x="2.9" y="0.9" width="5.3" height="3.8" fill="#ececec" stroke="#8a8a8a" stroke-width="0.7"/><path d="M10.6 10.6 C10.8 8 9.4 6.6 7.4 5.6" fill="none" stroke="#2a64b4" stroke-width="1"/><path d="M6.4 6.8 L7 5.2 L9 5.4" fill="none" stroke="#2a64b4" stroke-width="0.9"/></svg>
<svg class="a" style="left:622px;top:388.6px" width="12" height="12" viewBox="0 0 12 12"><rect x="3.8" y="0.9" width="5.6" height="3.8" fill="#ececec" stroke="#8a8a8a" stroke-width="0.7"/><path d="M3.8 5 C1.6 6.6 2 8.6 4.4 10.4" fill="none" stroke="#2a64b4" stroke-width="1"/><path d="M2.6 10.8 L5 10.8 L4.8 8.6" fill="none" stroke="#2a64b4" stroke-width="0.9"/></svg>
<svg class="a" style="left:640.6px;top:388.6px" width="12" height="11" viewBox="0 0 12 11"><ellipse cx="8.7" cy="3" rx="3" ry="2.2" fill="#25258a"/><ellipse cx="8.4" cy="2.6" rx="1.4" ry="0.8" fill="#b8b8ee"/><polygon points="0.4,7.20 0.4,10.00 6.30,6.90" fill="#1c37c8"/><polygon points="5.50,6.90 11.40,3.80 11.40,6.60" fill="#e8241c"/></svg>
<svg class="a" style="left:656.6px;top:388.6px" width="12" height="11" viewBox="0 0 12 11"><text x="0.8" y="3.8" font-family="Liberation Sans" font-size="4.8" font-weight="700" fill="#222">x.xx</text><polygon points="0.4,7.20 0.4,10.00 6.30,6.90" fill="#1c37c8"/><polygon points="5.50,6.90 11.40,3.80 11.40,6.60" fill="#e8241c"/></svg>
<div class="a" style="left:672.4px;top:388.8px;width:0.8px;height:11.4px;background:#b8b8b8"></div>
<svg class="a" style="left:677.4px;top:389.6px" width="12" height="10" viewBox="0 0 12 10"><rect x="0.4" y="0.4" width="11.2" height="9.2" fill="#d4d4d4" stroke="#909090" stroke-width="0.7"/><path d="M0.4 3.4 H11.6 M0.4 6.4 H11.6 M4.1 0.4 V9.6 M7.9 0.4 V9.6" stroke="#a0a0a0" stroke-width="0.6"/></svg>
<svg class="a" style="left:693.6px;top:388.8px" width="12" height="11" viewBox="0 0 12 11"><path d="M2.6 1.4 H8.6 V3.4" fill="none" stroke="#c89a10" stroke-width="0.8"/><circle cx="2.6" cy="1.4" r="1.1" fill="#f0c020"/><circle cx="8.6" cy="3" r="0.9" fill="#f0c020"/><rect x="0.4" y="4.2" width="11.2" height="6.2" fill="#f4ecb0" stroke="#8a8a6a" stroke-width="0.7"/><path d="M0.4 6.4 H11.6 M4.1 4.2 V10.4 M7.9 4.2 V10.4" stroke="#a0a080" stroke-width="0.6"/></svg>
<svg class="a" style="left:710px;top:388.8px" width="12" height="11" viewBox="0 0 12 11"><path d="M2.6 1.4 H8.6 V3.4" fill="none" stroke="#b0b0b0" stroke-width="0.8"/><circle cx="2.6" cy="1.4" r="1" fill="#b8b8b8"/><rect x="0.4" y="4.2" width="11.2" height="6.2" fill="#ececec" stroke="#a8a8a8" stroke-width="0.7"/><path d="M0.4 6.4 H11.6 M4.1 4.2 V10.4 M7.9 4.2 V10.4" stroke="#b8b8b8" stroke-width="0.6"/></svg>
<div class="a" style="left:726.4px;top:388.8px;width:0.8px;height:11.4px;background:#b8b8b8"></div>
<svg class="a" style="left:732px;top:389.4px" width="11" height="10" viewBox="0 0 11 10"><rect x="0.6" y="0.4" width="4.4" height="2.4" fill="#e8a0a8"/><rect x="0.6" y="2.8" width="6.4" height="2.4" fill="#9ad4a8"/><rect x="0.6" y="5.2" width="3.6" height="2.2" fill="#e8a0a8"/><rect x="0.6" y="7.4" width="9.8" height="2.2" fill="#9ad4a8"/><path d="M0.6 0 V9.8 H11" fill="none" stroke="#6a8a8a" stroke-width="0.7"/></svg>
<div class="a" style="left:747.2px;top:388.8px;width:0.8px;height:11.4px;background:#b8b8b8"></div>
<svg class="a" style="left:751.6px;top:389.4px" width="9" height="10" viewBox="0 0 9 10"><rect x="0.5" y="0.6" width="10" height="8.6" rx="1" fill="#b8e0b0" stroke="#4a8a4a" stroke-width="0.8"/><rect x="2.6" y="2.4" width="8" height="5" fill="#e8f4e4" stroke="#4a8a4a" stroke-width="0.6"/></svg>

<div class="a" style="left:252px;top:403.6px;width:508px;height:26.8px;background:#eeeeee"></div>
<div class="a" style="left:252px;top:403.6px;width:349px;height:6.8px;background:#e3e3e3"></div>
<div class="a" style="left:601px;top:403.6px;width:159px;height:6.8px;background:#c6c6c6"></div>
<div class="a" style="left:289.6px;top:403.6px;width:0.8px;height:26.8px;background:#fafafa"></div>
<div class="a" style="left:318.3px;top:403.6px;width:0.8px;height:26.8px;background:#fafafa"></div>
<div class="a" style="left:352.8px;top:403.6px;width:0.8px;height:26.8px;background:#fafafa"></div>
<div class="a" style="left:383.8px;top:403.6px;width:0.8px;height:26.8px;background:#fafafa"></div>
<div class="a" style="left:420.8px;top:403.6px;width:0.8px;height:26.8px;background:#fafafa"></div>
<div class="a" style="left:456.0px;top:403.6px;width:0.8px;height:26.8px;background:#fafafa"></div>
<div class="a" style="left:493.8px;top:403.6px;width:0.8px;height:26.8px;background:#fafafa"></div>
<div class="a" style="left:547.7px;top:403.6px;width:0.8px;height:26.8px;background:#fafafa"></div>
<div class="a" style="left:600.2px;top:403.6px;width:0.8px;height:26.8px;background:#fafafa"></div>
<div class="a" style="left:252px;top:410.3px;width:508px;height:0.7px;background:#f8f8f8"></div>
<div class="a" style="left:252px;top:410.6px;width:37.6px;height:19.8px;background:#e7e7e7"></div>
<div class="a" style="left:319.6px;top:410.7px;width:101.4px;height:8.6px;background:#eeeeee"></div>
<div class="a" style="left:319.4px;top:419.2px;width:101.8px;height:0.7px;background:#f8f8f8"></div>
<div class="a th" style="left:252px;top:412.8px;width:38.0px">Fundament<br>Nr.</div>
<div class="a th" style="left:290px;top:412.8px;width:28.7px">Knoten<br>Nr.</div>
<div class="a th" style="left:318.7px;top:411px;width:102.5px">Knotenpunkt-Koordinaten [m]</div>
<div class="a th" style="left:318.7px;top:421px;width:34.5px">X</div>
<div class="a th" style="left:353.2px;top:421px;width:31.0px">Y</div>
<div class="a th" style="left:384.2px;top:421px;width:37.0px">Z</div>
<div class="a th" style="left:421.2px;top:412.8px;width:35.2px">Bemess.-<br>Situation</div>
<div class="a th" style="left:456.4px;top:412.8px;width:37.8px">Belastung<br>Nr.</div>
<div class="a th" style="left:494.2px;top:412.8px;width:53.9px">Nachweis-<br>Kriterium η [--]</div>
<div class="a th" style="left:548.1px;top:412.8px;width:52.5px">Nachweis-<br>Art</div>
<div class="a" style="left:252px;top:430.4px;width:38px;height:71.05px;background:#e5e5e5"></div>
<div class="a" style="left:252px;top:450.70px;width:38px;height:10.15px;background:#c3c3c3"></div>
<div class="a td" style="left:252px;top:430.40px;width:38px;text-align:center">1</div>
<div class="a" style="left:290px;top:430.4px;width:470px;height:10.15px;background:#e7effa"></div>
<div class="a td" style="left:293.2px;top:430.40px;letter-spacing:-0.195px;">Kartesisch | X : 0.000 m | Y : 0.000 m | Z : 0.000 m</div>
<div class="a" style="left:290px;top:440.55px;width:310.8px;height:10.15px;background:#fefde8"></div>
<div class="a" style="left:600.8px;top:440.55px;width:159.2px;height:10.15px;background:#fffeee"></div>
<div class="a" style="left:290px;top:450.30px;width:470px;height:0.6px;background:#ececec"></div>
<div class="a td" style="left:292.3px;top:440.55px">1</div>
<div class="a td" style="left:321.2px;width:30px;text-align:right;top:440.55px">0.000</div>
<div class="a td" style="left:352.2px;width:30px;text-align:right;top:440.55px">0.000</div>
<div class="a td" style="left:389.2px;width:30px;text-align:right;top:440.55px">0.000</div>
<div class="a td" style="left:421.2px;width:35.2px;text-align:center;top:440.55px">BS1</div>
<div class="a td" style="left:456.4px;width:37.8px;text-align:center;top:440.55px">LK4</div>
<div class="a" style="left:498px;top:442.15px;width:10.18px;height:6.95px;background:#c2f0c7"></div>
<div class="a" style="left:497.6px;top:442.15px;width:0.7px;height:6.95px;background:#9fbaa4"></div>
<div class="a" style="left:517px;top:442.05px;width:0.7px;height:7.15px;background:#c6c6c6"></div>
<div class="a td" style="left:508px;width:30.1px;text-align:right;top:440.55px;font-size:7px">0.522</div>
<svg class="a" style="left:539.8px;top:443.15px" width="6.4" height="6" viewBox="0 0 6.4 6"><path d="M0.6 3 L2.4 4.9 L5.8 0.9" fill="none" stroke="#1a9850" stroke-width="1.4"/></svg>
<div class="a td mono" style="left:557.9px;top:440.55px;letter-spacing:0.498px;">UL7300.00</div>
<div class="a td" style="left:603.6px;top:440.75px;letter-spacing:0.06px">Grenzzustand der Tragfähigkeit | GEO | Grundbruchnachweis</div>
<div class="a" style="left:290px;top:450.70px;width:310.8px;height:10.15px;background:#fefde8"></div>
<div class="a" style="left:600.8px;top:450.70px;width:159.2px;height:10.15px;background:#fffeee"></div>
<div class="a" style="left:290px;top:460.45px;width:470px;height:0.6px;background:#ececec"></div>
<div class="a td" style="left:292.3px;top:450.70px"></div>
<div class="a td" style="left:321.2px;width:30px;text-align:right;top:450.70px">0.000</div>
<div class="a td" style="left:352.2px;width:30px;text-align:right;top:450.70px">0.000</div>
<div class="a td" style="left:389.2px;width:30px;text-align:right;top:450.70px">0.000</div>
<div class="a td" style="left:421.2px;width:35.2px;text-align:center;top:450.70px">BS1</div>
<div class="a td" style="left:456.4px;width:37.8px;text-align:center;top:450.70px">LK4</div>
<div class="a" style="left:498px;top:452.30px;width:9.73px;height:6.95px;background:#c2f0c7"></div>
<div class="a" style="left:497.6px;top:452.30px;width:0.7px;height:6.95px;background:#9fbaa4"></div>
<div class="a" style="left:517px;top:452.20px;width:0.7px;height:7.15px;background:#c6c6c6"></div>
<div class="a td" style="left:508px;width:30.1px;text-align:right;top:450.70px;font-size:7px">0.499</div>
<svg class="a" style="left:539.8px;top:453.30px" width="6.4" height="6" viewBox="0 0 6.4 6"><path d="M0.6 3 L2.4 4.9 L5.8 0.9" fill="none" stroke="#1a9850" stroke-width="1.4"/></svg>
<div class="a td mono" style="left:557.9px;top:450.70px;letter-spacing:0.498px;">UL7301.00</div>
<div class="a" style="left:601.2px;top:450.70px;width:158.8px;height:9.85px;background:#0a6fd2"></div>
<div class="a td" style="left:603.6px;top:450.90px;color:#fff;letter-spacing:0.06px">Grenzzustand der Tragfähigkeit | GEO | Gleiten nach 6.5.3</div>
<div class="a" style="left:290px;top:460.85px;width:310.8px;height:10.15px;background:#fefde8"></div>
<div class="a" style="left:600.8px;top:460.85px;width:159.2px;height:10.15px;background:#fffeee"></div>
<div class="a" style="left:290px;top:470.60px;width:470px;height:0.6px;background:#ececec"></div>
<div class="a td" style="left:292.3px;top:460.85px"></div>
<div class="a td" style="left:321.2px;width:30px;text-align:right;top:460.85px">0.000</div>
<div class="a td" style="left:352.2px;width:30px;text-align:right;top:460.85px">0.000</div>
<div class="a td" style="left:389.2px;width:30px;text-align:right;top:460.85px">0.000</div>
<div class="a td" style="left:421.2px;width:35.2px;text-align:center;top:460.85px">BS5</div>
<div class="a td" style="left:456.4px;width:37.8px;text-align:center;top:460.85px">LK31</div>
<div class="a" style="left:498px;top:462.45px;width:19.50px;height:6.95px;background:#c2f0c7"></div>
<div class="a" style="left:497.6px;top:462.45px;width:0.7px;height:6.95px;background:#9fbaa4"></div>
<div class="a" style="left:517px;top:462.35px;width:0.7px;height:7.15px;background:#c6c6c6"></div>
<div class="a td" style="left:508px;width:30.1px;text-align:right;top:460.85px;font-size:7px">1.000</div>
<svg class="a" style="left:539.8px;top:463.45px" width="6.4" height="6" viewBox="0 0 6.4 6"><path d="M0.6 3 L2.4 4.9 L5.8 0.9" fill="none" stroke="#1a9850" stroke-width="1.4"/></svg>
<div class="a td mono" style="left:557.9px;top:460.85px;letter-spacing:0.498px;">UL7400.00</div>
<div class="a td" style="left:603.6px;top:461.05px;letter-spacing:0.06px">Grenzzustand der Tragfähigkeit | UPL | Aufschwimmen</div>
<div class="a" style="left:290px;top:471.00px;width:310.8px;height:10.15px;background:#fefde8"></div>
<div class="a" style="left:600.8px;top:471.00px;width:159.2px;height:10.15px;background:#fffeee"></div>
<div class="a" style="left:290px;top:480.75px;width:470px;height:0.6px;background:#ececec"></div>
<div class="a td" style="left:292.3px;top:471.00px"></div>
<div class="a td" style="left:321.2px;width:30px;text-align:right;top:471.00px">0.000</div>
<div class="a td" style="left:352.2px;width:30px;text-align:right;top:471.00px">0.000</div>
<div class="a td" style="left:389.2px;width:30px;text-align:right;top:471.00px">0.000</div>
<div class="a td" style="left:421.2px;width:35.2px;text-align:center;top:471.00px">BS6</div>
<div class="a td" style="left:456.4px;width:37.8px;text-align:center;top:471.00px">LK33</div>
<div class="a" style="left:498px;top:472.60px;width:0.00px;height:6.95px;background:#c2f0c7"></div>
<div class="a" style="left:497.6px;top:472.60px;width:0.7px;height:6.95px;background:#9fbaa4"></div>
<div class="a" style="left:517px;top:472.50px;width:0.7px;height:7.15px;background:#c6c6c6"></div>
<div class="a td" style="left:508px;width:30.1px;text-align:right;top:471.00px;font-size:7px">0.000</div>
<svg class="a" style="left:539.8px;top:473.60px" width="6.4" height="6" viewBox="0 0 6.4 6"><path d="M0.6 3 L2.4 4.9 L5.8 0.9" fill="none" stroke="#1a9850" stroke-width="1.4"/></svg>
<div class="a td mono" style="left:557.9px;top:471.00px;letter-spacing:0.498px;">UL7200.00</div>
<div class="a td" style="left:603.6px;top:471.20px;letter-spacing:0.06px">Grenzzustand der Tragfähigkeit | EQU | Lagesicherheit</div>
<div class="a" style="left:290px;top:481.15px;width:310.8px;height:10.15px;background:#fefde8"></div>
<div class="a" style="left:600.8px;top:481.15px;width:159.2px;height:10.15px;background:#fffeee"></div>
<div class="a" style="left:290px;top:490.90px;width:470px;height:0.6px;background:#ececec"></div>
<div class="a td" style="left:292.3px;top:481.15px"></div>
<div class="a td" style="left:321.2px;width:30px;text-align:right;top:481.15px">0.000</div>
<div class="a td" style="left:352.2px;width:30px;text-align:right;top:481.15px">0.000</div>
<div class="a td" style="left:389.2px;width:30px;text-align:right;top:481.15px">0.000</div>
<div class="a td" style="left:421.2px;width:35.2px;text-align:center;top:481.15px">BS2</div>
<div class="a td" style="left:456.4px;width:37.8px;text-align:center;top:481.15px">LK16</div>
<div class="a" style="left:498px;top:482.75px;width:13.59px;height:6.95px;background:#c2f0c7"></div>
<div class="a" style="left:497.6px;top:482.75px;width:0.7px;height:6.95px;background:#9fbaa4"></div>
<div class="a" style="left:517px;top:482.65px;width:0.7px;height:7.15px;background:#c6c6c6"></div>
<div class="a td" style="left:508px;width:30.1px;text-align:right;top:481.15px;font-size:7px">0.697</div>
<svg class="a" style="left:539.8px;top:483.75px" width="6.4" height="6" viewBox="0 0 6.4 6"><path d="M0.6 3 L2.4 4.9 L5.8 0.9" fill="none" stroke="#1a9850" stroke-width="1.4"/></svg>
<div class="a td mono" style="left:557.9px;top:481.15px;letter-spacing:0.543px;">SL7800.00</div>
<div class="a td" style="left:603.6px;top:481.35px;letter-spacing:0.06px">Gebrauchstauglichkeit | GZG | Stark exzentrische Belastung</div>
<div class="a" style="left:290px;top:491.30px;width:310.8px;height:10.15px;background:#fefde8"></div>
<div class="a" style="left:600.8px;top:491.30px;width:159.2px;height:10.15px;background:#fffeee"></div>
<div class="a" style="left:290px;top:501.05px;width:470px;height:0.6px;background:#ececec"></div>
<div class="a td" style="left:292.3px;top:491.30px"></div>
<div class="a td" style="left:321.2px;width:30px;text-align:right;top:491.30px">0.000</div>
<div class="a td" style="left:352.2px;width:30px;text-align:right;top:491.30px">0.000</div>
<div class="a td" style="left:389.2px;width:30px;text-align:right;top:491.30px">0.000</div>
<div class="a td" style="left:421.2px;width:35.2px;text-align:center;top:491.30px">BS2</div>
<div class="a td" style="left:456.4px;width:37.8px;text-align:center;top:491.30px">LK15</div>
<div class="a" style="left:498px;top:492.90px;width:17.88px;height:6.95px;background:#c2f0c7"></div>
<div class="a" style="left:497.6px;top:492.90px;width:0.7px;height:6.95px;background:#9fbaa4"></div>
<div class="a" style="left:517px;top:492.80px;width:0.7px;height:7.15px;background:#c6c6c6"></div>
<div class="a td" style="left:508px;width:30.1px;text-align:right;top:491.30px;font-size:7px">0.917</div>
<svg class="a" style="left:539.8px;top:493.90px" width="6.4" height="6" viewBox="0 0 6.4 6"><path d="M0.6 3 L2.4 4.9 L5.8 0.9" fill="none" stroke="#1a9850" stroke-width="1.4"/></svg>
<div class="a td mono" style="left:557.9px;top:491.30px;letter-spacing:0.543px;">SL7801.00</div>
<div class="a td" style="left:603.6px;top:491.50px;letter-spacing:0.06px">Gebrauchstauglichkeit | GZG | Fundamentverdrehung</div>
<div class="a" style="left:289.7px;top:440.55px;width:0.6px;height:60.90px;background:#e6e6e6"></div>
<div class="a" style="left:318.4px;top:440.55px;width:0.6px;height:60.90px;background:#e6e6e6"></div>
<div class="a" style="left:352.9px;top:440.55px;width:0.6px;height:60.90px;background:#e6e6e6"></div>
<div class="a" style="left:383.9px;top:440.55px;width:0.6px;height:60.90px;background:#e6e6e6"></div>
<div class="a" style="left:420.9px;top:440.55px;width:0.6px;height:60.90px;background:#e6e6e6"></div>
<div class="a" style="left:456.1px;top:440.55px;width:0.6px;height:60.90px;background:#e6e6e6"></div>
<div class="a" style="left:493.9px;top:440.55px;width:0.6px;height:60.90px;background:#e6e6e6"></div>
<div class="a" style="left:547.8px;top:440.55px;width:0.6px;height:60.90px;background:#e6e6e6"></div>
<div class="a" style="left:600.3px;top:440.55px;width:0.6px;height:60.90px;background:#e6e6e6"></div>
<div class="a" style="left:252px;top:501.45px;width:38px;height:45.95px;background:#f7f7f7"></div>
<div class="a" style="left:251.8px;top:358px;width:0.9px;height:190.4px;background:#e0e0e8"></div>
<div class="a" style="left:0;top:561.8px;width:760px;height:8.2px;background:#f1f1f1"></div>
<div class="a" style="left:14.4px;top:564px;width:126px;height:6px;background:#e9e9f5"></div>
<div class="a" style="left:3.6px;top:566px;width:5px;height:4px;border:0.8px solid #2a3a8c;border-bottom:none;box-sizing:border-box;background:#fff"></div>
<div class="a" style="left:16.8px;top:567.4px;width:7px;height:2.6px;background:#bfeff4"></div>
<div class="a" style="left:27.6px;top:566.8px;font-size:7.4px;line-height:9px;height:3.2px;overflow:hidden;color:#333">1 - Global XYZ</div>
<svg class="a" style="left:130.6px;top:567.8px" width="7" height="3" viewBox="0 0 7 3"><path d="M0.6 0.8 L3.5 3.7 L6.4 0.8" fill="none" stroke="#777" stroke-width="0.8"/></svg>
<div class="a" style="left:143px;top:565.6px;width:0.8px;height:4.4px;background:#b8b8b8"></div>
<div class="a" style="left:224px;top:565.6px;width:0.8px;height:4.4px;background:#b8b8b8"></div>
<div class="a" style="left:327px;top:565.6px;width:0.8px;height:4.4px;background:#b8b8b8"></div>
<div class="a" style="left:376px;top:565.6px;width:0.8px;height:4.4px;background:#b8b8b8"></div>
<div class="a" style="left:570px;top:565.6px;width:0.8px;height:4.4px;background:#b8b8b8"></div>
<div class="a" style="left:151.6px;top:566.2px;width:5.6px;height:4px;border:0.8px solid #2f46a8;border-bottom:none;box-sizing:border-box;background:#fff"></div><svg class="a" style="left:148px;top:566px" width="5" height="4" viewBox="0 0 5 4"><polygon points="2.5,0 3.3,1.8 5,2 3.6,3.2 3.8,4 1.2,4 1.4,3.2 0,2 1.7,1.8" fill="#f2cc2a"/></svg>
<div class="a" style="left:166.6px;top:566.2px;width:5.6px;height:4px;border:0.8px solid #2f46a8;border-bottom:none;box-sizing:border-box;background:#fff"></div><svg class="a" style="left:163px;top:566px" width="5" height="4" viewBox="0 0 5 4"><polygon points="2.5,0 3.3,1.8 5,2 3.6,3.2 3.8,4 1.2,4 1.4,3.2 0,2 1.7,1.8" fill="#f2cc2a"/></svg>
<div class="a" style="left:183.6px;top:566.2px;width:5.6px;height:4px;border:0.8px solid #2f46a8;border-bottom:none;box-sizing:border-box;background:#fff"></div><svg class="a" style="left:180px;top:566px" width="5" height="4" viewBox="0 0 5 4"><polygon points="2.5,0 3.3,1.8 5,2 3.6,3.2 3.8,4 1.2,4 1.4,3.2 0,2 1.7,1.8" fill="#f2cc2a"/></svg>
<div class="a" style="left:198.6px;top:566.2px;width:5.6px;height:4px;border:0.8px solid #2f46a8;border-bottom:none;box-sizing:border-box;background:#fff"></div><svg class="a" style="left:195px;top:566px" width="5" height="4" viewBox="0 0 5 4"><polygon points="2.5,0 3.3,1.8 5,2 3.6,3.2 3.8,4 1.2,4 1.4,3.2 0,2 1.7,1.8" fill="#f2cc2a"/></svg>
<div class="a" style="left:211.6px;top:566.2px;width:5.6px;height:4px;border:0.8px solid #2f46a8;border-bottom:none;box-sizing:border-box;background:#fff"></div><svg class="a" style="left:208px;top:566px" width="5" height="4" viewBox="0 0 5 4"><polygon points="2.5,0 3.3,1.8 5,2 3.6,3.2 3.8,4 1.2,4 1.4,3.2 0,2 1.7,1.8" fill="#f2cc2a"/></svg>
<svg class="a" style="left:228px;top:566px" width="5" height="4" viewBox="0 0 5 4"><polygon points="2.5,0 3.3,1.8 5,2 3.6,3.2 3.8,4 1.2,4 1.4,3.2 0,2 1.7,1.8" fill="#f2cc2a"/></svg><div class="a" style="left:231.6px;top:566.6px;width:5px;height:3.6px;border:0.7px solid #8a8a9a;border-bottom:none;box-sizing:border-box;background:#fff"></div>
<svg class="a" style="left:243px;top:566px" width="5" height="4" viewBox="0 0 5 4"><polygon points="2.5,0 3.3,1.8 5,2 3.6,3.2 3.8,4 1.2,4 1.4,3.2 0,2 1.7,1.8" fill="#f2cc2a"/></svg><div class="a" style="left:246.6px;top:566.6px;width:5px;height:3.6px;border:0.7px solid #8a8a9a;border-bottom:none;box-sizing:border-box;background:#fff"></div>
<svg class="a" style="left:258px;top:566px" width="5" height="4" viewBox="0 0 5 4"><polygon points="2.5,0 3.3,1.8 5,2 3.6,3.2 3.8,4 1.2,4 1.4,3.2 0,2 1.7,1.8" fill="#f2cc2a"/></svg><div class="a" style="left:261.6px;top:566.6px;width:5px;height:3.6px;border:0.7px solid #8a8a9a;border-bottom:none;box-sizing:border-box;background:#fff"></div>
<svg class="a" style="left:282px;top:566px" width="5" height="4" viewBox="0 0 5 4"><polygon points="2.5,0 3.3,1.8 5,2 3.6,3.2 3.8,4 1.2,4 1.4,3.2 0,2 1.7,1.8" fill="#f2cc2a"/></svg><div class="a" style="left:285.6px;top:566.6px;width:5px;height:3.6px;border:0.7px solid #8a8a9a;border-bottom:none;box-sizing:border-box;background:#fff"></div>
<div class="a" style="left:303.6px;top:566.2px;width:5.6px;height:4px;border:0.8px solid #2f46a8;border-bottom:none;box-sizing:border-box;background:#fff"></div><svg class="a" style="left:300px;top:566px" width="5" height="4" viewBox="0 0 5 4"><polygon points="2.5,0 3.3,1.8 5,2 3.6,3.2 3.8,4 1.2,4 1.4,3.2 0,2 1.7,1.8" fill="#f2cc2a"/></svg>
<div class="a" style="left:316.6px;top:566.2px;width:5.6px;height:4px;border:0.8px solid #2f46a8;border-bottom:none;box-sizing:border-box;background:#fff"></div><svg class="a" style="left:313px;top:566px" width="5" height="4" viewBox="0 0 5 4"><polygon points="2.5,0 3.3,1.8 5,2 3.6,3.2 3.8,4 1.2,4 1.4,3.2 0,2 1.7,1.8" fill="#f2cc2a"/></svg>
<div class="a" style="left:336.6px;top:567.2px;width:1.4px;height:2.8px;background:#333"></div><div class="a" style="left:339px;top:568px;width:1.2px;height:2px;background:#555"></div><div class="a" style="left:340.6px;top:566.2px;width:2.2px;height:2px;background:#e02020"></div>
<div class="a" style="left:354.6px;top:567.2px;width:1.4px;height:2.8px;background:#333"></div><div class="a" style="left:357px;top:568px;width:1.2px;height:2px;background:#555"></div><div class="a" style="left:358.6px;top:566.2px;width:2.2px;height:2px;background:#3a6ad8"></div>
<svg class="a" style="left:382px;top:565.6px" width="10" height="4.4" viewBox="0 0 10 4.4"><path d="M0.5 4.4 L6 1.4" stroke="#8a8a8a" stroke-width="0.8"/><path d="M5 0.8 L8.4 2.6 L9.4 0.4" fill="none" stroke="#e02020" stroke-width="1"/></svg>
<svg class="a" style="left:398px;top:565.6px" width="10" height="4.4" viewBox="0 0 10 4.4"><path d="M0.5 4.4 L6 1.4" stroke="#8a8a8a" stroke-width="0.8"/><path d="M5 0.8 L8.4 2.6 L9.4 0.4" fill="none" stroke="#e02020" stroke-width="1"/></svg>
<svg class="a" style="left:413px;top:565.6px" width="10" height="4.4" viewBox="0 0 10 4.4"><path d="M0.5 4.4 L6 1.4" stroke="#8a8a8a" stroke-width="0.8"/><path d="M5 0.8 L8.4 2.6 L9.4 0.4" fill="none" stroke="#e02020" stroke-width="1"/></svg>
<svg class="a" style="left:438px;top:565.6px" width="10" height="4.4" viewBox="0 0 10 4.4"><path d="M0.5 4.4 L6 1.4" stroke="#8a8a8a" stroke-width="0.8"/><path d="M5 0.8 L8.4 2.6 L9.4 0.4" fill="none" stroke="#e02020" stroke-width="1"/></svg>
<svg class="a" style="left:453px;top:565.6px" width="10" height="4.4" viewBox="0 0 10 4.4"><path d="M0.5 4.4 L6 1.4" stroke="#8a8a8a" stroke-width="0.8"/><path d="M5 0.8 L8.4 2.6 L9.4 0.4" fill="none" stroke="#e02020" stroke-width="1"/></svg>
<svg class="a" style="left:468px;top:565.6px" width="10" height="4.4" viewBox="0 0 10 4.4"><path d="M0.5 4.4 L6 1.4" stroke="#8a8a8a" stroke-width="0.8"/><path d="M5 0.8 L8.4 2.6 L9.4 0.4" fill="none" stroke="#e02020" stroke-width="1"/></svg>
<svg class="a" style="left:514px;top:565.6px" width="10" height="4.4" viewBox="0 0 10 4.4"><path d="M0.5 4.4 L6 1.4" stroke="#8a8a8a" stroke-width="0.8"/><path d="M5 0.8 L8.4 2.6 L9.4 0.4" fill="none" stroke="#e02020" stroke-width="1"/></svg>
<svg class="a" style="left:527px;top:565.6px" width="10" height="4.4" viewBox="0 0 10 4.4"><path d="M0.5 4.4 L6 1.4" stroke="#8a8a8a" stroke-width="0.8"/><path d="M5 0.8 L8.4 2.6 L9.4 0.4" fill="none" stroke="#e02020" stroke-width="1"/></svg>
<svg class="a" style="left:542px;top:565.6px" width="10" height="4.4" viewBox="0 0 10 4.4"><path d="M0.5 4.4 L6 1.4" stroke="#8a8a8a" stroke-width="0.8"/><path d="M5 0.8 L8.4 2.6 L9.4 0.4" fill="none" stroke="#e02020" stroke-width="1"/></svg>
<svg class="a" style="left:557px;top:565.6px" width="10" height="4.4" viewBox="0 0 10 4.4"><path d="M0.5 4.4 L6 1.4" stroke="#8a8a8a" stroke-width="0.8"/><path d="M5 0.8 L8.4 2.6 L9.4 0.4" fill="none" stroke="#e02020" stroke-width="1"/></svg>
<svg class="a" style="left:632px;top:565.6px" width="10" height="4.4" viewBox="0 0 10 4.4"><path d="M0.5 4.4 L6 1.4" stroke="#8a8a8a" stroke-width="0.8"/><path d="M5 0.8 L8.4 2.6 L9.4 0.4" fill="none" stroke="#e02020" stroke-width="1"/></svg>
<svg class="a" style="left:646px;top:565.6px" width="10" height="4.4" viewBox="0 0 10 4.4"><path d="M0.5 4.4 L6 1.4" stroke="#8a8a8a" stroke-width="0.8"/><path d="M5 0.8 L8.4 2.6 L9.4 0.4" fill="none" stroke="#e02020" stroke-width="1"/></svg>
<svg class="a" style="left:659px;top:565.6px" width="10" height="4.4" viewBox="0 0 10 4.4"><path d="M0.5 4.4 L6 1.4" stroke="#8a8a8a" stroke-width="0.8"/><path d="M5 0.8 L8.4 2.6 L9.4 0.4" fill="none" stroke="#e02020" stroke-width="1"/></svg>
<svg class="a" style="left:483px;top:565.6px" width="10" height="4.4" viewBox="0 0 10 4.4"><path d="M0.5 4.4 L6 1.4" stroke="#8a8a8a" stroke-width="0.8"/><path d="M4 0.6 L7 3.4 M7.4 0.6 L4 3.6" fill="none" stroke="#2a50d8" stroke-width="1"/></svg>
<svg class="a" style="left:601px;top:565.6px" width="10" height="4.4" viewBox="0 0 10 4.4"><path d="M0.5 4.4 L6 1.4" stroke="#8a8a8a" stroke-width="0.8"/><path d="M4 0.6 L7 3.4 M7.4 0.6 L4 3.6" fill="none" stroke="#2a50d8" stroke-width="1"/></svg>
<svg class="a" style="left:616px;top:565.6px" width="10" height="4.4" viewBox="0 0 10 4.4"><path d="M0.5 4.4 L6 1.4" stroke="#8a8a8a" stroke-width="0.8"/><path d="M4 0.6 L7 3.4 M7.4 0.6 L4 3.6" fill="none" stroke="#2a50d8" stroke-width="1"/></svg>
<svg class="a" style="left:578px;top:565.8px" width="9" height="4.2" viewBox="0 0 9 4.2"><path d="M0.6 4.2 L4.5 0.8 L8.4 4.2" fill="none" stroke="#333" stroke-width="1"/></svg>
<div class="a" style="left:498px;top:567px;width:5px;height:1.6px;background:#e02020"></div>
<div class="a" style="left:252px;top:548px;width:508px;height:13.8px;background:#fff"></div>
<div class="a" style="left:252px;top:547.8px;width:508px;height:0.9px;background:#dcdce4"></div>
<div class="a" style="left:336.8px;top:549.3px;width:146.8px;height:12.3px;background:#f0f0f0;border:0.8px solid #dadada;box-sizing:border-box"></div><div class="a tb" style="left:341.6px;top:550px;letter-spacing:0.04px">Ausnutzungen nach Bemessungssituation</div>
<div class="a" style="left:484.4px;top:549.3px;width:110.0px;height:12.3px;background:#f0f0f0;border:0.8px solid #dadada;box-sizing:border-box"></div><div class="a tb" style="left:489.2px;top:550px;letter-spacing:0.04px">Ausnutzungen nach Belastung</div>
<div class="a" style="left:595.2px;top:548.2px;width:114.79999999999995px;height:13.4px;background:#fff;border:0.8px solid #dadada;box-sizing:border-box"></div><div class="a tb" style="left:600.0px;top:550px;letter-spacing:0.04px">Ausnutzungen nach Fundament</div>
<div class="a" style="left:710.8px;top:549.3px;width:89.20000000000005px;height:12.3px;background:#f0f0f0;border:0.8px solid #dadada;box-sizing:border-box"></div><div class="a tb" style="left:715.6px;top:550px;letter-spacing:0.04px">Ausnutzungen nach Art</div>
<svg class="a" style="left:255.6px;top:553.3px" width="5" height="5" viewBox="0 0 5 5"><rect x="0.2" y="0.3" width="0.9" height="4.4" fill="#222"/><polygon points="4.6,0.3 4.6,4.7 1.6,2.5" fill="#222"/></svg>
<svg class="a" style="left:266.6px;top:553.3px" width="4" height="5" viewBox="0 0 4 5"><polygon points="3.4,0.3 3.4,4.7 0.4,2.5" fill="#222"/></svg>
<div class="a tb" style="left:282.6px;top:550.1px">3 von 4</div>
<svg class="a" style="left:318px;top:553.3px" width="4" height="5" viewBox="0 0 4 5"><polygon points="0.5,0.3 0.5,4.7 3.5,2.5" fill="#222"/></svg>
<svg class="a" style="left:327.6px;top:553.3px" width="5" height="5" viewBox="0 0 5 5"><polygon points="0.4,0.3 0.4,4.7 3.4,2.5" fill="#222"/><rect x="3.9" y="0.3" width="0.9" height="4.4" fill="#222"/></svg>
</body></html>
